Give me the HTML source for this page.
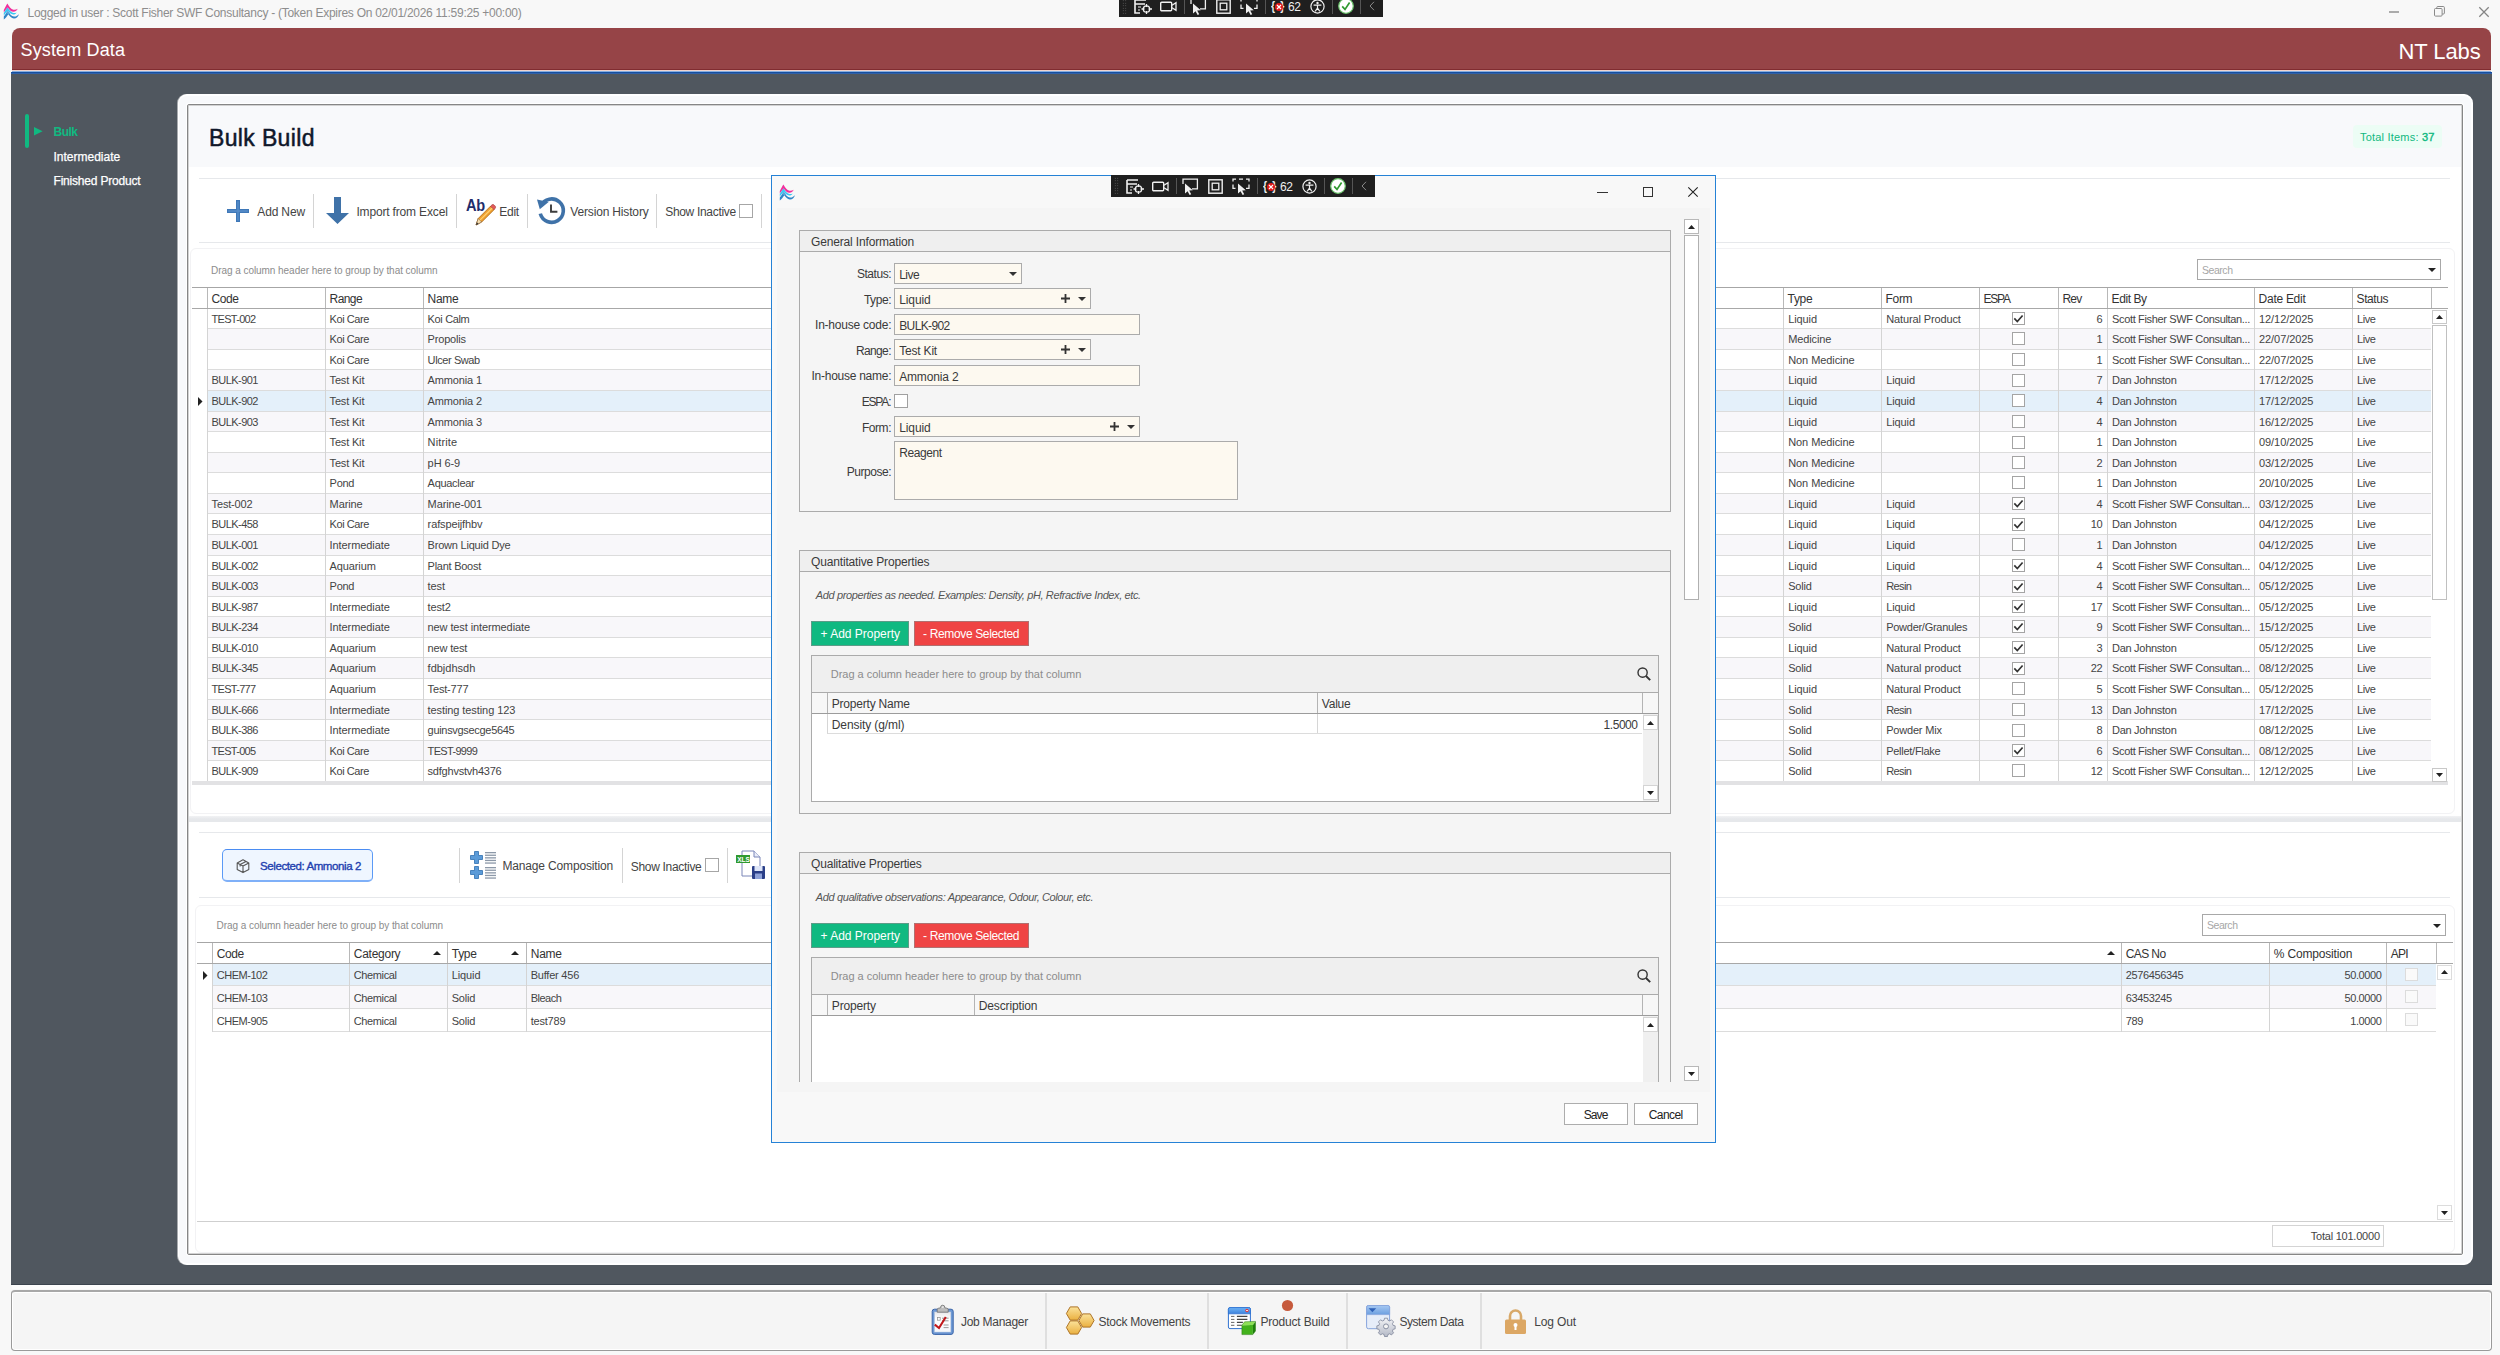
<!DOCTYPE html>
<html><head><meta charset="utf-8"><title>System Data</title><style>
*{box-sizing:border-box;margin:0;padding:0}
html,body{width:2500px;height:1355px;overflow:hidden;background:#f8f8f8;font-family:"Liberation Sans",sans-serif;font-size:12px;color:#333}
.a{position:absolute}
.t{position:absolute;white-space:nowrap;line-height:1}
svg{position:absolute;overflow:visible}
.cb{position:absolute;width:14px;height:14px;border:1px solid #a6a6a6;background:#fff}
.sep{position:absolute;width:1px;background:#d4d4d4}
.hl{position:absolute;height:1px;background:#e6e8eb}
</style></head>
<body>
<div class="t" style="left:27.5px;top:7px;font-size:12px;color:#8d8d8d;letter-spacing:-0.27px">Logged in user : Scott Fisher SWF Consultancy - (Token Expires On 02/01/2026 11:59:25 +00:00)</div>
<div class="a" style="left:11px;top:72px;width:2481px;height:1213px;background:#50575f;border-bottom:1px solid #3c444e"></div>
<div class="a" style="left:12px;top:28px;width:2479px;height:41px;background:#964447;border-radius:8px 8px 0 0"></div>
<div class="a" style="left:12px;top:69px;width:2479px;height:1px;background:#802c30"></div>
<div class="a" style="left:12px;top:70px;width:2479px;height:1px;background:#f0d4ce"></div>
<div class="a" style="left:12px;top:71px;width:2479px;height:1px;background:#86aee0"></div>
<div class="a" style="left:11px;top:72px;width:2481px;height:1px;background:#164e9e"></div>
<div class="a" style="left:11px;top:73px;width:2481px;height:1px;background:#2f60a8"></div>
<div class="t" style="left:20.5px;top:41px;font-size:18px;color:#fff;letter-spacing:0.15px">System Data</div>
<div class="t" style="left:2398.5px;top:40.5px;font-size:22px;color:#fff;letter-spacing:-0.1px">NT Labs</div>
<div class="a" style="left:25.3px;top:113.5px;width:4px;height:34.5px;background:#10b981;border-radius:2px"></div>
<svg style="left:34px;top:127px" width="9" height="9" viewBox="0 0 9 9"><path d="M0 0 L8.6 4.3 L0 8.6 Z" fill="#10b981"/></svg>
<div class="t" style="left:53.5px;top:126px;font-size:12px;font-weight:700;color:#10b981;letter-spacing:-0.5px">Bulk</div>
<div class="t" style="left:53.5px;top:151px;font-size:12px;color:#fff;letter-spacing:0px;-webkit-text-stroke:.25px #fff">Intermediate</div>
<div class="t" style="left:53.5px;top:175px;font-size:12px;color:#fff;letter-spacing:-0.2px;-webkit-text-stroke:.25px #fff">Finished Product</div>
<div class="a" style="left:178px;top:94px;width:2295px;height:1171px;background:#f8f9fb;border:2px solid #fff;border-left-width:1px;border-radius:9px;box-shadow:-1px 0 0 0 rgba(255,255,255,.5)"></div>
<div class="a" style="left:187px;top:104px;width:2276px;height:1151px;background:#fff;border:1px solid #868686;border-radius:2px;box-shadow:0 0 0 1px #fff,inset 0 0 0 1px #d2d2d2"></div>
<div class="a" style="left:189px;top:106px;width:2272px;height:61px;background:#f8f9fb"></div>
<div class="t" style="left:209px;top:127px;font-size:23px;color:#0f172a;-webkit-text-stroke:0.5px #0f172a;letter-spacing:0.35px">Bulk Build</div>
<div class="a" style="left:2353px;top:125px;width:89px;height:23px;background:#ecfdf5;border-radius:4px"></div>
<div class="t" style="left:2360px;top:132px;font-size:11px;color:#10b981;letter-spacing:0.2px">Total Items: <b style="font-weight:400;-webkit-text-stroke:0.4px #10b981">37</b></div>
<svg style="left:0px;top:0px" width="20" height="20" viewBox="0 0 20 20"><path d="M3.8 12.6 L3.8 10 C5 8 6.4 5 7.4 3.5 C8.8 6.4 11 9.2 13.5 9.7 C15 9.9 16.5 9.5 17.7 8.8 C16.9 10.9 15 11.9 13.4 11.8 C11 11.6 9 9.5 7.6 7.4 C6.2 9 5 11 3.8 12.6 Z" fill="#f0309c"/><path d="M3.8 15.6 L3.8 12.9 C5 11.2 6.3 9 7.6 7.5 C9 10 11 12.6 13.5 13 C14.8 13.1 15.8 12.9 16.6 12.5 C15.9 14 14.5 14.7 13.2 14.6 C11 14.3 9.2 12.6 7.9 10.8 C6.5 12 5 14 3.8 15.6Z" fill="#38c8f4"/><path d="M3.8 19.6 L3.8 16.4 C5 14.8 6.5 12.4 7.9 10.9 C9.5 13.5 11.5 16.2 14 16.6 C16 16.8 17.8 15.6 19 14 C18.4 16.7 16.2 18.7 13.8 18.5 C11.5 18.2 9.8 16.2 8.3 14.2 C7 16 5.5 18.5 3.8 19.6 Z" fill="#2f86c8"/><path d="M6.2 13 L7.9 10.9 L10 13.6 L8.3 14.2 Z" fill="#5aa4dc"/></svg>
<div class="a" style="left:1119px;top:-5px;width:264px;height:22px;background:#1f1f1f"></div>
<div class="a" style="left:1122px;top:-3px;width:5px;height:18px;background-image:radial-gradient(#666 0.7px,transparent 0.8px);background-size:2.5px 2.5px"></div>
<svg style="left:1134px;top:-1.1px" width="19" height="15" viewBox="0 0 19 15"><path d="M1 1h11M1 1v13h5M1 5h10" fill="none" stroke="#f0f0f0" stroke-width="1.6"/><path d="M4 8h3M4 11h2" stroke="#f0f0f0" stroke-width="1.2"/><circle cx="12.5" cy="10" r="3.2" fill="none" stroke="#f0f0f0" stroke-width="1.3"/><path d="M12.5 5v3M12.5 12v3M7.5 10h3M14.5 10h3.5" stroke="#f0f0f0" stroke-width="1.3"/></svg>
<svg style="left:1160px;top:0.9px" width="17" height="11" viewBox="0 0 17 11"><rect x=".7" y="1.2" width="11" height="8.6" rx="1" fill="none" stroke="#f0f0f0" stroke-width="1.4"/><path d="M12 4.2 L16 1.6 V9.4 L12 6.8" fill="none" stroke="#f0f0f0" stroke-width="1.3"/></svg>
<div class="a" style="left:1184px;top:-2px;width:1px;height:16px;background:#555"></div>
<svg style="left:1188px;top:-2.1px" width="18" height="17" viewBox="0 0 18 17"><path d="M3 6V1.2h14.4v9.6H12" fill="none" stroke="#f0f0f0" stroke-width="1.3"/><path d="M5 5.5 L5 15.5 L7.6 13.2 L9.6 17 L11.2 16.2 L9.2 12.4 L12.8 12.2 Z" fill="#f0f0f0"/></svg>
<svg style="left:1216px;top:-1.1px" width="15" height="15" viewBox="0 0 15 15"><rect x=".8" y=".8" width="13.4" height="13.4" fill="none" stroke="#f0f0f0" stroke-width="1.4"/><rect x="4.2" y="4.2" width="6.6" height="6.6" fill="none" stroke="#f0f0f0" stroke-width="1.3"/></svg>
<svg style="left:1240px;top:-2.1px" width="18" height="17" viewBox="0 0 18 17"><path d="M1 3.5V1.2h3M7 1.2h4M14 1.2h3v2.3M17 6.5v3.8h-3M1 6.5v3.8h2.5" fill="none" stroke="#f0f0f0" stroke-width="1.3"/><path d="M6 5.5 L6 15.5 L8.6 13.2 L10.6 17 L12.2 16.2 L10.2 12.4 L13.8 12.2 Z" fill="#f0f0f0"/></svg>
<div class="a" style="left:1265px;top:-2px;width:1px;height:16px;background:#555"></div>
<div class="t" style="left:1271px;top:-1.0px;font-size:13px;font-weight:700;color:#f0f0f0;letter-spacing:6.5px;transform:scaleX(.8);transform-origin:0 0">{}</div>
<div class="a" style="left:1275.2px;top:2.6px;width:8px;height:8px;border-radius:4px;background:#e01818"></div>
<svg style="left:1277.2px;top:4.6px" width="4" height="4" viewBox="0 0 4 4"><path d="M0 0L4 4M4 0L0 4" stroke="#fff" stroke-width="1.2"/></svg>
<div class="t" style="left:1288px;top:0.5px;font-size:12px;color:#f0f0f0;letter-spacing:-0.3px">62</div>
<svg style="left:1310px;top:-1.1px" width="15" height="15" viewBox="0 0 15 15"><circle cx="7.5" cy="7.5" r="6.6" fill="none" stroke="#f0f0f0" stroke-width="1.2"/><circle cx="7.5" cy="4" r="1.2" fill="#f0f0f0"/><path d="M3.6 6.2h7.8M7.5 6.2v3M7.5 9 L5.2 12.4M7.5 9 L9.8 12.4" stroke="#f0f0f0" stroke-width="1.2" fill="none"/></svg>
<div class="a" style="left:1332px;top:-2px;width:1px;height:16px;background:#555"></div>
<svg style="left:1338px;top:-1.6px" width="16" height="16" viewBox="0 0 16 16"><circle cx="8" cy="8" r="7.3" fill="#fff" stroke="#6cc46c" stroke-width="1.2"/><path d="M4.2 8.4 L7 11.4 L11.6 4.6" fill="none" stroke="#2f9a2f" stroke-width="1.7"/></svg>
<div class="a" style="left:1360px;top:-2px;width:1px;height:16px;background:#555"></div>
<svg style="left:1369px;top:1.4px" width="6" height="10" viewBox="0 0 6 10"><path d="M5 .8 L1 5 L5 9.2" fill="none" stroke="#8a8a8a" stroke-width="1"/></svg>
<div class="a" style="left:2389px;top:11px;width:10px;height:2px;background:#ababab"></div>
<svg style="left:2434px;top:6px" width="11" height="11" viewBox="0 0 11 11"><rect x=".5" y="2.5" width="7.6" height="7.6" rx="1" fill="none" stroke="#8a8a8a" stroke-width="1"/><path d="M2.8 2.5V1.4Q2.8 .5 3.8 .5H9.3Q10.4 .5 10.4 1.6V7Q10.4 8 9.4 8H8.2" fill="none" stroke="#8a8a8a" stroke-width="1"/></svg>
<svg style="left:2479px;top:7px" width="10" height="10" viewBox="0 0 10 10"><path d="M.3 .3L9.7 9.7M9.7 .3L.3 9.7" stroke="#858585" stroke-width="1.25"/></svg>
<div class="hl" style="left:199px;top:178px;width:2251px"></div>
<div class="hl" style="left:199px;top:242px;width:2251px"></div>
<svg style="left:227px;top:200px" width="22" height="22" viewBox="0 0 22 22"><path d="M9 0h4v9h9v4h-9v9h-4v-9h-9v-4h9z" fill="#3f78b8"/><path d="M10.3 1.2h1.4v9.1h9.1v1.4h-9.1v9.1h-1.4v-9.1h-9.1v-1.4h9.1z" fill="#6ea0d8" opacity=".55"/></svg>
<div class="t" style="left:257.3px;top:206px;font-size:12px;color:#444;letter-spacing:-0.152px;">Add New</div>
<div class="sep" style="left:313px;top:194px;height:34px"></div>
<svg style="left:326px;top:197px" width="23" height="27" viewBox="0 0 23 27"><path d="M8 0h7v16h8l-11.5 11l-11.5-11h8z" fill="#3f72a8"/></svg>
<div class="t" style="left:356.4px;top:206px;font-size:12px;color:#444;letter-spacing:-0.162px;">Import from Excel</div>
<div class="sep" style="left:456px;top:194px;height:34px"></div>
<div class="t" style="left:465.5px;top:198px;font-size:16.6px;font-weight:700;color:#1f2d6b;letter-spacing:-0.4px;transform:scaleX(.88);transform-origin:0 0">Ab</div>
<svg style="left:474px;top:204px" width="22" height="22" viewBox="0 0 22 22"><path d="M2 21 L4.2 14.5 L16.5 2.2 L20 5.7 L7.7 18 Z" fill="#f0a030" stroke="#a86410" stroke-width=".8"/><path d="M16.5 2.2 L18 .8 Q19 0 20 .9 L21.3 2.2 Q22 3.2 21.2 4.2 L20 5.7 Z" fill="#e25b5b" stroke="#a03030" stroke-width=".6"/><path d="M2 21 L4.2 14.5 L7.7 18 Z" fill="#f5deb0" stroke="#806040" stroke-width=".6"/><path d="M2 21 L2.9 18.3 L4.6 20 Z" fill="#333"/><path d="M6 16.2 L18.2 4" stroke="#ffd070" stroke-width="1.2"/></svg>
<div class="t" style="left:499.3px;top:206px;font-size:12px;color:#444;letter-spacing:-0.291px;">Edit</div>
<div class="sep" style="left:527px;top:194px;height:34px"></div>
<svg style="left:0;top:0" width="600" height="240" viewBox="0 0 600 240"><path d="M541 205.7 A11.7 11.7 0 1 1 540.3 213.6" fill="none" stroke="#3f72a8" stroke-width="3.6"/><path d="M537 199.6 L548.6 202 L539.8 209.2 Z" fill="#3f72a8"/><path d="M551 204.4 V211.8 H557.4" fill="none" stroke="#3c3c3c" stroke-width="1.9"/></svg>
<div class="t" style="left:570.3px;top:206px;font-size:12px;color:#444;letter-spacing:-0.163px;">Version History</div>
<div class="sep" style="left:656px;top:194px;height:34px"></div>
<div class="t" style="left:665.2px;top:206px;font-size:12px;color:#444;letter-spacing:-0.312px;">Show Inactive</div>
<div class="cb" style="left:739px;top:204px"></div>
<div class="sep" style="left:761px;top:194px;height:34px"></div>
<div class="a" style="left:190px;top:248px;width:2265px;height:566px;border:1px solid #f2f2f4;border-radius:6px;background:#fff"></div>
<div class="t" style="left:211px;top:265.5px;font-size:10px;color:#8c8c8c;letter-spacing:-0.051px;">Drag a column header here to group by that column</div>
<div class="a" style="left:2197px;top:259px;width:244px;height:21px;border:1px solid #a8a8a8;background:#fff"></div>
<div class="t" style="left:2202px;top:265px;font-size:10.5px;color:#a6a6a6;letter-spacing:-0.456px;">Search</div>
<svg style="left:2428px;top:268px" width="8" height="4" viewBox="0 0 8 4"><path d="M0 0h8l-4 4z" fill="#222"/></svg>
<div class="a" style="left:192px;top:287px;width:2256px;height:22px;background:#fff;border-top:1px solid #a6a6a6;border-bottom:1px solid #a8a8a8"></div>
<div class="a" style="left:207px;top:288px;width:1px;height:20px;background:#b8b8b8"></div>
<div class="t" style="left:211.6px;top:293px;font-size:12px;color:#333;letter-spacing:-0.426px;">Code</div>
<div class="a" style="left:325px;top:288px;width:1px;height:20px;background:#b8b8b8"></div>
<div class="t" style="left:329.6px;top:293px;font-size:12px;color:#333;letter-spacing:-0.585px;">Range</div>
<div class="a" style="left:423px;top:288px;width:1px;height:20px;background:#b8b8b8"></div>
<div class="t" style="left:427.6px;top:293px;font-size:12px;color:#333;letter-spacing:-0.312px;">Name</div>
<div class="a" style="left:1783px;top:288px;width:1px;height:20px;background:#b8b8b8"></div>
<div class="t" style="left:1787.6px;top:293px;font-size:12px;color:#333;letter-spacing:-0.335px;">Type</div>
<div class="a" style="left:1881px;top:288px;width:1px;height:20px;background:#b8b8b8"></div>
<div class="t" style="left:1885.6px;top:293px;font-size:12px;color:#333;letter-spacing:-0.353px;">Form</div>
<div class="a" style="left:1979px;top:288px;width:1px;height:20px;background:#b8b8b8"></div>
<div class="t" style="left:1983.6px;top:293px;font-size:12px;color:#333;letter-spacing:-1.25px;">ESPA</div>
<div class="a" style="left:2058px;top:288px;width:1px;height:20px;background:#b8b8b8"></div>
<div class="t" style="left:2062.6px;top:293px;font-size:12px;color:#333;letter-spacing:-0.895px;">Rev</div>
<div class="a" style="left:2107px;top:288px;width:1px;height:20px;background:#b8b8b8"></div>
<div class="t" style="left:2111.6px;top:293px;font-size:12px;color:#333;letter-spacing:-0.429px;">Edit By</div>
<div class="a" style="left:2254px;top:288px;width:1px;height:20px;background:#b8b8b8"></div>
<div class="t" style="left:2258.6px;top:293px;font-size:12px;color:#333;letter-spacing:-0.279px;">Date Edit</div>
<div class="a" style="left:2352px;top:288px;width:1px;height:20px;background:#b8b8b8"></div>
<div class="t" style="left:2356.6px;top:293px;font-size:12px;color:#333;letter-spacing:-0.413px;">Status</div>
<div class="a" style="left:2431px;top:288px;width:1px;height:20px;background:#b8b8b8"></div>
<div class="a" style="left:207px;top:309px;width:2224px;height:20px;background:#fff;border-bottom:1px solid #dcdcdc"></div>
<div class="t" style="left:211.6px;top:314px;font-size:11px;color:#444;letter-spacing:-0.714px;">TEST-002</div>
<div class="t" style="left:329.6px;top:314px;font-size:11px;color:#444;letter-spacing:-0.435px;">Koi Care</div>
<div class="t" style="left:427.6px;top:314px;font-size:11px;color:#444;letter-spacing:-0.354px;">Koi Calm</div>
<div class="t" style="left:1788.2px;top:314px;font-size:11px;color:#444;letter-spacing:-0.094px;">Liquid</div>
<div class="t" style="left:1886.2px;top:314px;font-size:11px;color:#444;letter-spacing:-0.125px;">Natural Product</div>
<div class="cb" style="left:2012px;top:312px;width:13px;height:13px;border-color:#a4a4a4"><svg style="left:0;top:0" width="11" height="11" viewBox="0 0 11 11"><path d="M1.3 5.4 L4.3 8.5 L9.6 2.5" fill="none" stroke="#333" stroke-width="1.7"/></svg></div>
<div class="t" style="right:397.66px;top:314px;font-size:11px;color:#444;letter-spacing:-0.36px;">6</div>
<div class="t" style="left:2112px;top:314px;font-size:11px;color:#444;letter-spacing:-0.345px;">Scott Fisher SWF Consultan...</div>
<div class="t" style="left:2259px;top:314px;font-size:11px;color:#444;letter-spacing:-0.066px;">12/12/2025</div>
<div class="t" style="left:2357px;top:314px;font-size:11px;color:#444;letter-spacing:-0.466px;">Live</div>
<div class="a" style="left:207px;top:329px;width:2224px;height:21px;background:#f8f7fa;border-bottom:1px solid #dcdcdc"></div>
<div class="t" style="left:329.6px;top:334px;font-size:11px;color:#444;letter-spacing:-0.435px;">Koi Care</div>
<div class="t" style="left:427.6px;top:334px;font-size:11px;color:#444;letter-spacing:-0.193px;">Propolis</div>
<div class="t" style="left:1788.2px;top:334px;font-size:11px;color:#444;letter-spacing:-0.105px;">Medicine</div>
<div class="cb" style="left:2012px;top:332px;width:13px;height:13px;border-color:#a4a4a4"></div>
<div class="t" style="right:397.66px;top:334px;font-size:11px;color:#444;letter-spacing:-0.36px;">1</div>
<div class="t" style="left:2112px;top:334px;font-size:11px;color:#444;letter-spacing:-0.345px;">Scott Fisher SWF Consultan...</div>
<div class="t" style="left:2259px;top:334px;font-size:11px;color:#444;letter-spacing:-0.066px;">22/07/2025</div>
<div class="t" style="left:2357px;top:334px;font-size:11px;color:#444;letter-spacing:-0.466px;">Live</div>
<div class="a" style="left:207px;top:350px;width:2224px;height:20px;background:#fff;border-bottom:1px solid #dcdcdc"></div>
<div class="t" style="left:329.6px;top:355px;font-size:11px;color:#444;letter-spacing:-0.435px;">Koi Care</div>
<div class="t" style="left:427.6px;top:355px;font-size:11px;color:#444;letter-spacing:-0.406px;">Ulcer Swab</div>
<div class="t" style="left:1788.2px;top:355px;font-size:11px;color:#444;letter-spacing:-0.072px;">Non Medicine</div>
<div class="cb" style="left:2012px;top:353px;width:13px;height:13px;border-color:#a4a4a4"></div>
<div class="t" style="right:397.66px;top:355px;font-size:11px;color:#444;letter-spacing:-0.36px;">1</div>
<div class="t" style="left:2112px;top:355px;font-size:11px;color:#444;letter-spacing:-0.345px;">Scott Fisher SWF Consultan...</div>
<div class="t" style="left:2259px;top:355px;font-size:11px;color:#444;letter-spacing:-0.066px;">22/07/2025</div>
<div class="t" style="left:2357px;top:355px;font-size:11px;color:#444;letter-spacing:-0.466px;">Live</div>
<div class="a" style="left:207px;top:370px;width:2224px;height:21px;background:#f8f7fa;border-bottom:1px solid #dcdcdc"></div>
<div class="t" style="left:211.6px;top:375px;font-size:11px;color:#444;letter-spacing:-0.565px;">BULK-901</div>
<div class="t" style="left:329.6px;top:375px;font-size:11px;color:#444;letter-spacing:-0.175px;">Test Kit</div>
<div class="t" style="left:427.6px;top:375px;font-size:11px;color:#444;letter-spacing:-0.152px;">Ammonia 1</div>
<div class="t" style="left:1788.2px;top:375px;font-size:11px;color:#444;letter-spacing:-0.094px;">Liquid</div>
<div class="t" style="left:1886.2px;top:375px;font-size:11px;color:#444;letter-spacing:-0.094px;">Liquid</div>
<div class="cb" style="left:2012px;top:374px;width:13px;height:13px;border-color:#a4a4a4"></div>
<div class="t" style="right:397.66px;top:375px;font-size:11px;color:#444;letter-spacing:-0.36px;">7</div>
<div class="t" style="left:2112px;top:375px;font-size:11px;color:#444;letter-spacing:-0.285px;">Dan Johnston</div>
<div class="t" style="left:2259px;top:375px;font-size:11px;color:#444;letter-spacing:-0.066px;">17/12/2025</div>
<div class="t" style="left:2357px;top:375px;font-size:11px;color:#444;letter-spacing:-0.466px;">Live</div>
<div class="a" style="left:207px;top:391px;width:2224px;height:21px;background:#e4f0fa;border-bottom:1px solid #dcdcdc"></div>
<div class="t" style="left:211.6px;top:396px;font-size:11px;color:#444;letter-spacing:-0.565px;">BULK-902</div>
<div class="t" style="left:329.6px;top:396px;font-size:11px;color:#444;letter-spacing:-0.175px;">Test Kit</div>
<div class="t" style="left:427.6px;top:396px;font-size:11px;color:#444;letter-spacing:-0.152px;">Ammonia 2</div>
<div class="t" style="left:1788.2px;top:396px;font-size:11px;color:#444;letter-spacing:-0.094px;">Liquid</div>
<div class="t" style="left:1886.2px;top:396px;font-size:11px;color:#444;letter-spacing:-0.094px;">Liquid</div>
<div class="cb" style="left:2012px;top:394px;width:13px;height:13px;border-color:#a4a4a4"></div>
<div class="t" style="right:397.66px;top:396px;font-size:11px;color:#444;letter-spacing:-0.36px;">4</div>
<div class="t" style="left:2112px;top:396px;font-size:11px;color:#444;letter-spacing:-0.285px;">Dan Johnston</div>
<div class="t" style="left:2259px;top:396px;font-size:11px;color:#444;letter-spacing:-0.066px;">17/12/2025</div>
<div class="t" style="left:2357px;top:396px;font-size:11px;color:#444;letter-spacing:-0.466px;">Live</div>
<div class="a" style="left:207px;top:412px;width:2224px;height:20px;background:#f8f7fa;border-bottom:1px solid #dcdcdc"></div>
<div class="t" style="left:211.6px;top:417px;font-size:11px;color:#444;letter-spacing:-0.565px;">BULK-903</div>
<div class="t" style="left:329.6px;top:417px;font-size:11px;color:#444;letter-spacing:-0.175px;">Test Kit</div>
<div class="t" style="left:427.6px;top:417px;font-size:11px;color:#444;letter-spacing:-0.152px;">Ammonia 3</div>
<div class="t" style="left:1788.2px;top:417px;font-size:11px;color:#444;letter-spacing:-0.094px;">Liquid</div>
<div class="t" style="left:1886.2px;top:417px;font-size:11px;color:#444;letter-spacing:-0.094px;">Liquid</div>
<div class="cb" style="left:2012px;top:415px;width:13px;height:13px;border-color:#a4a4a4"></div>
<div class="t" style="right:397.66px;top:417px;font-size:11px;color:#444;letter-spacing:-0.36px;">4</div>
<div class="t" style="left:2112px;top:417px;font-size:11px;color:#444;letter-spacing:-0.285px;">Dan Johnston</div>
<div class="t" style="left:2259px;top:417px;font-size:11px;color:#444;letter-spacing:-0.066px;">16/12/2025</div>
<div class="t" style="left:2357px;top:417px;font-size:11px;color:#444;letter-spacing:-0.466px;">Live</div>
<div class="a" style="left:207px;top:432px;width:2224px;height:21px;background:#fff;border-bottom:1px solid #dcdcdc"></div>
<div class="t" style="left:329.6px;top:437px;font-size:11px;color:#444;letter-spacing:-0.175px;">Test Kit</div>
<div class="t" style="left:427.6px;top:437px;font-size:11px;color:#444;letter-spacing:0.139px;">Nitrite</div>
<div class="t" style="left:1788.2px;top:437px;font-size:11px;color:#444;letter-spacing:-0.072px;">Non Medicine</div>
<div class="cb" style="left:2012px;top:436px;width:13px;height:13px;border-color:#a4a4a4"></div>
<div class="t" style="right:397.66px;top:437px;font-size:11px;color:#444;letter-spacing:-0.36px;">1</div>
<div class="t" style="left:2112px;top:437px;font-size:11px;color:#444;letter-spacing:-0.285px;">Dan Johnston</div>
<div class="t" style="left:2259px;top:437px;font-size:11px;color:#444;letter-spacing:-0.066px;">09/10/2025</div>
<div class="t" style="left:2357px;top:437px;font-size:11px;color:#444;letter-spacing:-0.466px;">Live</div>
<div class="a" style="left:207px;top:453px;width:2224px;height:20px;background:#f8f7fa;border-bottom:1px solid #dcdcdc"></div>
<div class="t" style="left:329.6px;top:458px;font-size:11px;color:#444;letter-spacing:-0.175px;">Test Kit</div>
<div class="t" style="left:427.6px;top:458px;font-size:11px;color:#444;letter-spacing:-0.074px;">pH 6-9</div>
<div class="t" style="left:1788.2px;top:458px;font-size:11px;color:#444;letter-spacing:-0.072px;">Non Medicine</div>
<div class="cb" style="left:2012px;top:456px;width:13px;height:13px;border-color:#a4a4a4"></div>
<div class="t" style="right:397.66px;top:458px;font-size:11px;color:#444;letter-spacing:-0.36px;">2</div>
<div class="t" style="left:2112px;top:458px;font-size:11px;color:#444;letter-spacing:-0.285px;">Dan Johnston</div>
<div class="t" style="left:2259px;top:458px;font-size:11px;color:#444;letter-spacing:-0.066px;">03/12/2025</div>
<div class="t" style="left:2357px;top:458px;font-size:11px;color:#444;letter-spacing:-0.466px;">Live</div>
<div class="a" style="left:207px;top:473px;width:2224px;height:21px;background:#fff;border-bottom:1px solid #dcdcdc"></div>
<div class="t" style="left:329.6px;top:478px;font-size:11px;color:#444;letter-spacing:-0.284px;">Pond</div>
<div class="t" style="left:427.6px;top:478px;font-size:11px;color:#444;letter-spacing:-0.294px;">Aquaclear</div>
<div class="t" style="left:1788.2px;top:478px;font-size:11px;color:#444;letter-spacing:-0.072px;">Non Medicine</div>
<div class="cb" style="left:2012px;top:476px;width:13px;height:13px;border-color:#a4a4a4"></div>
<div class="t" style="right:397.66px;top:478px;font-size:11px;color:#444;letter-spacing:-0.36px;">1</div>
<div class="t" style="left:2112px;top:478px;font-size:11px;color:#444;letter-spacing:-0.285px;">Dan Johnston</div>
<div class="t" style="left:2259px;top:478px;font-size:11px;color:#444;letter-spacing:-0.066px;">20/10/2025</div>
<div class="t" style="left:2357px;top:478px;font-size:11px;color:#444;letter-spacing:-0.466px;">Live</div>
<div class="a" style="left:207px;top:494px;width:2224px;height:20px;background:#f8f7fa;border-bottom:1px solid #dcdcdc"></div>
<div class="t" style="left:211.6px;top:499px;font-size:11px;color:#444;letter-spacing:-0.164px;">Test-002</div>
<div class="t" style="left:329.6px;top:499px;font-size:11px;color:#444;letter-spacing:-0.113px;">Marine</div>
<div class="t" style="left:427.6px;top:499px;font-size:11px;color:#444;letter-spacing:-0.115px;">Marine-001</div>
<div class="t" style="left:1788.2px;top:499px;font-size:11px;color:#444;letter-spacing:-0.094px;">Liquid</div>
<div class="t" style="left:1886.2px;top:499px;font-size:11px;color:#444;letter-spacing:-0.094px;">Liquid</div>
<div class="cb" style="left:2012px;top:497px;width:13px;height:13px;border-color:#a4a4a4"><svg style="left:0;top:0" width="11" height="11" viewBox="0 0 11 11"><path d="M1.3 5.4 L4.3 8.5 L9.6 2.5" fill="none" stroke="#333" stroke-width="1.7"/></svg></div>
<div class="t" style="right:397.66px;top:499px;font-size:11px;color:#444;letter-spacing:-0.36px;">4</div>
<div class="t" style="left:2112px;top:499px;font-size:11px;color:#444;letter-spacing:-0.345px;">Scott Fisher SWF Consultan...</div>
<div class="t" style="left:2259px;top:499px;font-size:11px;color:#444;letter-spacing:-0.066px;">03/12/2025</div>
<div class="t" style="left:2357px;top:499px;font-size:11px;color:#444;letter-spacing:-0.466px;">Live</div>
<div class="a" style="left:207px;top:514px;width:2224px;height:21px;background:#fff;border-bottom:1px solid #dcdcdc"></div>
<div class="t" style="left:211.6px;top:519px;font-size:11px;color:#444;letter-spacing:-0.565px;">BULK-458</div>
<div class="t" style="left:329.6px;top:519px;font-size:11px;color:#444;letter-spacing:-0.435px;">Koi Care</div>
<div class="t" style="left:427.6px;top:519px;font-size:11px;color:#444;letter-spacing:-0.118px;">rafspeijfhbv</div>
<div class="t" style="left:1788.2px;top:519px;font-size:11px;color:#444;letter-spacing:-0.094px;">Liquid</div>
<div class="t" style="left:1886.2px;top:519px;font-size:11px;color:#444;letter-spacing:-0.094px;">Liquid</div>
<div class="cb" style="left:2012px;top:518px;width:13px;height:13px;border-color:#a4a4a4"><svg style="left:0;top:0" width="11" height="11" viewBox="0 0 11 11"><path d="M1.3 5.4 L4.3 8.5 L9.6 2.5" fill="none" stroke="#333" stroke-width="1.7"/></svg></div>
<div class="t" style="right:397.66px;top:519px;font-size:11px;color:#444;letter-spacing:-0.36px;">10</div>
<div class="t" style="left:2112px;top:519px;font-size:11px;color:#444;letter-spacing:-0.285px;">Dan Johnston</div>
<div class="t" style="left:2259px;top:519px;font-size:11px;color:#444;letter-spacing:-0.066px;">04/12/2025</div>
<div class="t" style="left:2357px;top:519px;font-size:11px;color:#444;letter-spacing:-0.466px;">Live</div>
<div class="a" style="left:207px;top:535px;width:2224px;height:21px;background:#f8f7fa;border-bottom:1px solid #dcdcdc"></div>
<div class="t" style="left:211.6px;top:540px;font-size:11px;color:#444;letter-spacing:-0.565px;">BULK-001</div>
<div class="t" style="left:329.6px;top:540px;font-size:11px;color:#444;letter-spacing:-0.089px;">Intermediate</div>
<div class="t" style="left:427.6px;top:540px;font-size:11px;color:#444;letter-spacing:-0.218px;">Brown Liquid Dye</div>
<div class="t" style="left:1788.2px;top:540px;font-size:11px;color:#444;letter-spacing:-0.094px;">Liquid</div>
<div class="t" style="left:1886.2px;top:540px;font-size:11px;color:#444;letter-spacing:-0.094px;">Liquid</div>
<div class="cb" style="left:2012px;top:538px;width:13px;height:13px;border-color:#a4a4a4"></div>
<div class="t" style="right:397.66px;top:540px;font-size:11px;color:#444;letter-spacing:-0.36px;">1</div>
<div class="t" style="left:2112px;top:540px;font-size:11px;color:#444;letter-spacing:-0.285px;">Dan Johnston</div>
<div class="t" style="left:2259px;top:540px;font-size:11px;color:#444;letter-spacing:-0.066px;">04/12/2025</div>
<div class="t" style="left:2357px;top:540px;font-size:11px;color:#444;letter-spacing:-0.466px;">Live</div>
<div class="a" style="left:207px;top:556px;width:2224px;height:20px;background:#fff;border-bottom:1px solid #dcdcdc"></div>
<div class="t" style="left:211.6px;top:561px;font-size:11px;color:#444;letter-spacing:-0.565px;">BULK-002</div>
<div class="t" style="left:329.6px;top:561px;font-size:11px;color:#444;letter-spacing:-0.115px;">Aquarium</div>
<div class="t" style="left:427.6px;top:561px;font-size:11px;color:#444;letter-spacing:-0.262px;">Plant Boost</div>
<div class="t" style="left:1788.2px;top:561px;font-size:11px;color:#444;letter-spacing:-0.094px;">Liquid</div>
<div class="t" style="left:1886.2px;top:561px;font-size:11px;color:#444;letter-spacing:-0.094px;">Liquid</div>
<div class="cb" style="left:2012px;top:559px;width:13px;height:13px;border-color:#a4a4a4"><svg style="left:0;top:0" width="11" height="11" viewBox="0 0 11 11"><path d="M1.3 5.4 L4.3 8.5 L9.6 2.5" fill="none" stroke="#333" stroke-width="1.7"/></svg></div>
<div class="t" style="right:397.66px;top:561px;font-size:11px;color:#444;letter-spacing:-0.36px;">4</div>
<div class="t" style="left:2112px;top:561px;font-size:11px;color:#444;letter-spacing:-0.345px;">Scott Fisher SWF Consultan...</div>
<div class="t" style="left:2259px;top:561px;font-size:11px;color:#444;letter-spacing:-0.066px;">04/12/2025</div>
<div class="t" style="left:2357px;top:561px;font-size:11px;color:#444;letter-spacing:-0.466px;">Live</div>
<div class="a" style="left:207px;top:576px;width:2224px;height:21px;background:#f8f7fa;border-bottom:1px solid #dcdcdc"></div>
<div class="t" style="left:211.6px;top:581px;font-size:11px;color:#444;letter-spacing:-0.565px;">BULK-003</div>
<div class="t" style="left:329.6px;top:581px;font-size:11px;color:#444;letter-spacing:-0.284px;">Pond</div>
<div class="t" style="left:427.6px;top:581px;font-size:11px;color:#444;letter-spacing:-0.093px;">test</div>
<div class="t" style="left:1788.2px;top:581px;font-size:11px;color:#444;letter-spacing:-0.215px;">Solid</div>
<div class="t" style="left:1886.2px;top:581px;font-size:11px;color:#444;letter-spacing:-0.597px;">Resin</div>
<div class="cb" style="left:2012px;top:580px;width:13px;height:13px;border-color:#a4a4a4"><svg style="left:0;top:0" width="11" height="11" viewBox="0 0 11 11"><path d="M1.3 5.4 L4.3 8.5 L9.6 2.5" fill="none" stroke="#333" stroke-width="1.7"/></svg></div>
<div class="t" style="right:397.66px;top:581px;font-size:11px;color:#444;letter-spacing:-0.36px;">4</div>
<div class="t" style="left:2112px;top:581px;font-size:11px;color:#444;letter-spacing:-0.345px;">Scott Fisher SWF Consultan...</div>
<div class="t" style="left:2259px;top:581px;font-size:11px;color:#444;letter-spacing:-0.066px;">05/12/2025</div>
<div class="t" style="left:2357px;top:581px;font-size:11px;color:#444;letter-spacing:-0.466px;">Live</div>
<div class="a" style="left:207px;top:597px;width:2224px;height:20px;background:#fff;border-bottom:1px solid #dcdcdc"></div>
<div class="t" style="left:211.6px;top:602px;font-size:11px;color:#444;letter-spacing:-0.565px;">BULK-987</div>
<div class="t" style="left:329.6px;top:602px;font-size:11px;color:#444;letter-spacing:-0.089px;">Intermediate</div>
<div class="t" style="left:427.6px;top:602px;font-size:11px;color:#444;letter-spacing:-0.147px;">test2</div>
<div class="t" style="left:1788.2px;top:602px;font-size:11px;color:#444;letter-spacing:-0.094px;">Liquid</div>
<div class="t" style="left:1886.2px;top:602px;font-size:11px;color:#444;letter-spacing:-0.094px;">Liquid</div>
<div class="cb" style="left:2012px;top:600px;width:13px;height:13px;border-color:#a4a4a4"><svg style="left:0;top:0" width="11" height="11" viewBox="0 0 11 11"><path d="M1.3 5.4 L4.3 8.5 L9.6 2.5" fill="none" stroke="#333" stroke-width="1.7"/></svg></div>
<div class="t" style="right:397.66px;top:602px;font-size:11px;color:#444;letter-spacing:-0.36px;">17</div>
<div class="t" style="left:2112px;top:602px;font-size:11px;color:#444;letter-spacing:-0.345px;">Scott Fisher SWF Consultan...</div>
<div class="t" style="left:2259px;top:602px;font-size:11px;color:#444;letter-spacing:-0.066px;">05/12/2025</div>
<div class="t" style="left:2357px;top:602px;font-size:11px;color:#444;letter-spacing:-0.466px;">Live</div>
<div class="a" style="left:207px;top:617px;width:2224px;height:21px;background:#f8f7fa;border-bottom:1px solid #dcdcdc"></div>
<div class="t" style="left:211.6px;top:622px;font-size:11px;color:#444;letter-spacing:-0.565px;">BULK-234</div>
<div class="t" style="left:329.6px;top:622px;font-size:11px;color:#444;letter-spacing:-0.089px;">Intermediate</div>
<div class="t" style="left:427.6px;top:622px;font-size:11px;color:#444;letter-spacing:-0.105px;">new test intermediate</div>
<div class="t" style="left:1788.2px;top:622px;font-size:11px;color:#444;letter-spacing:-0.215px;">Solid</div>
<div class="t" style="left:1886.2px;top:622px;font-size:11px;color:#444;letter-spacing:-0.269px;">Powder/Granules</div>
<div class="cb" style="left:2012px;top:620px;width:13px;height:13px;border-color:#a4a4a4"><svg style="left:0;top:0" width="11" height="11" viewBox="0 0 11 11"><path d="M1.3 5.4 L4.3 8.5 L9.6 2.5" fill="none" stroke="#333" stroke-width="1.7"/></svg></div>
<div class="t" style="right:397.66px;top:622px;font-size:11px;color:#444;letter-spacing:-0.36px;">9</div>
<div class="t" style="left:2112px;top:622px;font-size:11px;color:#444;letter-spacing:-0.345px;">Scott Fisher SWF Consultan...</div>
<div class="t" style="left:2259px;top:622px;font-size:11px;color:#444;letter-spacing:-0.066px;">15/12/2025</div>
<div class="t" style="left:2357px;top:622px;font-size:11px;color:#444;letter-spacing:-0.466px;">Live</div>
<div class="a" style="left:207px;top:638px;width:2224px;height:20px;background:#fff;border-bottom:1px solid #dcdcdc"></div>
<div class="t" style="left:211.6px;top:643px;font-size:11px;color:#444;letter-spacing:-0.565px;">BULK-010</div>
<div class="t" style="left:329.6px;top:643px;font-size:11px;color:#444;letter-spacing:-0.115px;">Aquarium</div>
<div class="t" style="left:427.6px;top:643px;font-size:11px;color:#444;letter-spacing:-0.169px;">new test</div>
<div class="t" style="left:1788.2px;top:643px;font-size:11px;color:#444;letter-spacing:-0.094px;">Liquid</div>
<div class="t" style="left:1886.2px;top:643px;font-size:11px;color:#444;letter-spacing:-0.125px;">Natural Product</div>
<div class="cb" style="left:2012px;top:641px;width:13px;height:13px;border-color:#a4a4a4"><svg style="left:0;top:0" width="11" height="11" viewBox="0 0 11 11"><path d="M1.3 5.4 L4.3 8.5 L9.6 2.5" fill="none" stroke="#333" stroke-width="1.7"/></svg></div>
<div class="t" style="right:397.66px;top:643px;font-size:11px;color:#444;letter-spacing:-0.36px;">3</div>
<div class="t" style="left:2112px;top:643px;font-size:11px;color:#444;letter-spacing:-0.285px;">Dan Johnston</div>
<div class="t" style="left:2259px;top:643px;font-size:11px;color:#444;letter-spacing:-0.066px;">05/12/2025</div>
<div class="t" style="left:2357px;top:643px;font-size:11px;color:#444;letter-spacing:-0.466px;">Live</div>
<div class="a" style="left:207px;top:658px;width:2224px;height:21px;background:#f8f7fa;border-bottom:1px solid #dcdcdc"></div>
<div class="t" style="left:211.6px;top:663px;font-size:11px;color:#444;letter-spacing:-0.565px;">BULK-345</div>
<div class="t" style="left:329.6px;top:663px;font-size:11px;color:#444;letter-spacing:-0.115px;">Aquarium</div>
<div class="t" style="left:427.6px;top:663px;font-size:11px;color:#444;letter-spacing:-0.007px;">fdbjdhsdh</div>
<div class="t" style="left:1788.2px;top:663px;font-size:11px;color:#444;letter-spacing:-0.215px;">Solid</div>
<div class="t" style="left:1886.2px;top:663px;font-size:11px;color:#444;letter-spacing:-0.024px;">Natural product</div>
<div class="cb" style="left:2012px;top:662px;width:13px;height:13px;border-color:#a4a4a4"><svg style="left:0;top:0" width="11" height="11" viewBox="0 0 11 11"><path d="M1.3 5.4 L4.3 8.5 L9.6 2.5" fill="none" stroke="#333" stroke-width="1.7"/></svg></div>
<div class="t" style="right:397.66px;top:663px;font-size:11px;color:#444;letter-spacing:-0.36px;">22</div>
<div class="t" style="left:2112px;top:663px;font-size:11px;color:#444;letter-spacing:-0.345px;">Scott Fisher SWF Consultan...</div>
<div class="t" style="left:2259px;top:663px;font-size:11px;color:#444;letter-spacing:-0.066px;">08/12/2025</div>
<div class="t" style="left:2357px;top:663px;font-size:11px;color:#444;letter-spacing:-0.466px;">Live</div>
<div class="a" style="left:207px;top:679px;width:2224px;height:21px;background:#fff;border-bottom:1px solid #dcdcdc"></div>
<div class="t" style="left:211.6px;top:684px;font-size:11px;color:#444;letter-spacing:-0.714px;">TEST-777</div>
<div class="t" style="left:329.6px;top:684px;font-size:11px;color:#444;letter-spacing:-0.115px;">Aquarium</div>
<div class="t" style="left:427.6px;top:684px;font-size:11px;color:#444;letter-spacing:-0.164px;">Test-777</div>
<div class="t" style="left:1788.2px;top:684px;font-size:11px;color:#444;letter-spacing:-0.094px;">Liquid</div>
<div class="t" style="left:1886.2px;top:684px;font-size:11px;color:#444;letter-spacing:-0.125px;">Natural Product</div>
<div class="cb" style="left:2012px;top:682px;width:13px;height:13px;border-color:#a4a4a4"></div>
<div class="t" style="right:397.66px;top:684px;font-size:11px;color:#444;letter-spacing:-0.36px;">5</div>
<div class="t" style="left:2112px;top:684px;font-size:11px;color:#444;letter-spacing:-0.345px;">Scott Fisher SWF Consultan...</div>
<div class="t" style="left:2259px;top:684px;font-size:11px;color:#444;letter-spacing:-0.066px;">05/12/2025</div>
<div class="t" style="left:2357px;top:684px;font-size:11px;color:#444;letter-spacing:-0.466px;">Live</div>
<div class="a" style="left:207px;top:700px;width:2224px;height:20px;background:#f8f7fa;border-bottom:1px solid #dcdcdc"></div>
<div class="t" style="left:211.6px;top:705px;font-size:11px;color:#444;letter-spacing:-0.565px;">BULK-666</div>
<div class="t" style="left:329.6px;top:705px;font-size:11px;color:#444;letter-spacing:-0.089px;">Intermediate</div>
<div class="t" style="left:427.6px;top:705px;font-size:11px;color:#444;letter-spacing:-0.087px;">testing testing 123</div>
<div class="t" style="left:1788.2px;top:705px;font-size:11px;color:#444;letter-spacing:-0.215px;">Solid</div>
<div class="t" style="left:1886.2px;top:705px;font-size:11px;color:#444;letter-spacing:-0.597px;">Resin</div>
<div class="cb" style="left:2012px;top:703px;width:13px;height:13px;border-color:#a4a4a4"></div>
<div class="t" style="right:397.66px;top:705px;font-size:11px;color:#444;letter-spacing:-0.36px;">13</div>
<div class="t" style="left:2112px;top:705px;font-size:11px;color:#444;letter-spacing:-0.285px;">Dan Johnston</div>
<div class="t" style="left:2259px;top:705px;font-size:11px;color:#444;letter-spacing:-0.066px;">17/12/2025</div>
<div class="t" style="left:2357px;top:705px;font-size:11px;color:#444;letter-spacing:-0.466px;">Live</div>
<div class="a" style="left:207px;top:720px;width:2224px;height:21px;background:#fff;border-bottom:1px solid #dcdcdc"></div>
<div class="t" style="left:211.6px;top:725px;font-size:11px;color:#444;letter-spacing:-0.565px;">BULK-386</div>
<div class="t" style="left:329.6px;top:725px;font-size:11px;color:#444;letter-spacing:-0.089px;">Intermediate</div>
<div class="t" style="left:427.6px;top:725px;font-size:11px;color:#444;letter-spacing:-0.308px;">guinsvgsecge5645</div>
<div class="t" style="left:1788.2px;top:725px;font-size:11px;color:#444;letter-spacing:-0.215px;">Solid</div>
<div class="t" style="left:1886.2px;top:725px;font-size:11px;color:#444;letter-spacing:-0.192px;">Powder Mix</div>
<div class="cb" style="left:2012px;top:724px;width:13px;height:13px;border-color:#a4a4a4"></div>
<div class="t" style="right:397.66px;top:725px;font-size:11px;color:#444;letter-spacing:-0.36px;">8</div>
<div class="t" style="left:2112px;top:725px;font-size:11px;color:#444;letter-spacing:-0.285px;">Dan Johnston</div>
<div class="t" style="left:2259px;top:725px;font-size:11px;color:#444;letter-spacing:-0.066px;">08/12/2025</div>
<div class="t" style="left:2357px;top:725px;font-size:11px;color:#444;letter-spacing:-0.466px;">Live</div>
<div class="a" style="left:207px;top:741px;width:2224px;height:20px;background:#f8f7fa;border-bottom:1px solid #dcdcdc"></div>
<div class="t" style="left:211.6px;top:746px;font-size:11px;color:#444;letter-spacing:-0.714px;">TEST-005</div>
<div class="t" style="left:329.6px;top:746px;font-size:11px;color:#444;letter-spacing:-0.435px;">Koi Care</div>
<div class="t" style="left:427.6px;top:746px;font-size:11px;color:#444;letter-spacing:-0.674px;">TEST-9999</div>
<div class="t" style="left:1788.2px;top:746px;font-size:11px;color:#444;letter-spacing:-0.215px;">Solid</div>
<div class="t" style="left:1886.2px;top:746px;font-size:11px;color:#444;letter-spacing:-0.269px;">Pellet/Flake</div>
<div class="cb" style="left:2012px;top:744px;width:13px;height:13px;border-color:#a4a4a4"><svg style="left:0;top:0" width="11" height="11" viewBox="0 0 11 11"><path d="M1.3 5.4 L4.3 8.5 L9.6 2.5" fill="none" stroke="#333" stroke-width="1.7"/></svg></div>
<div class="t" style="right:397.66px;top:746px;font-size:11px;color:#444;letter-spacing:-0.36px;">6</div>
<div class="t" style="left:2112px;top:746px;font-size:11px;color:#444;letter-spacing:-0.345px;">Scott Fisher SWF Consultan...</div>
<div class="t" style="left:2259px;top:746px;font-size:11px;color:#444;letter-spacing:-0.066px;">08/12/2025</div>
<div class="t" style="left:2357px;top:746px;font-size:11px;color:#444;letter-spacing:-0.466px;">Live</div>
<div class="a" style="left:207px;top:761px;width:2224px;height:21px;background:#fff;border-bottom:1px solid #dcdcdc"></div>
<div class="t" style="left:211.6px;top:766px;font-size:11px;color:#444;letter-spacing:-0.565px;">BULK-909</div>
<div class="t" style="left:329.6px;top:766px;font-size:11px;color:#444;letter-spacing:-0.435px;">Koi Care</div>
<div class="t" style="left:427.6px;top:766px;font-size:11px;color:#444;letter-spacing:-0.224px;">sdfghvstvh4376</div>
<div class="t" style="left:1788.2px;top:766px;font-size:11px;color:#444;letter-spacing:-0.215px;">Solid</div>
<div class="t" style="left:1886.2px;top:766px;font-size:11px;color:#444;letter-spacing:-0.597px;">Resin</div>
<div class="cb" style="left:2012px;top:764px;width:13px;height:13px;border-color:#a4a4a4"></div>
<div class="t" style="right:397.66px;top:766px;font-size:11px;color:#444;letter-spacing:-0.36px;">12</div>
<div class="t" style="left:2112px;top:766px;font-size:11px;color:#444;letter-spacing:-0.345px;">Scott Fisher SWF Consultan...</div>
<div class="t" style="left:2259px;top:766px;font-size:11px;color:#444;letter-spacing:-0.066px;">12/12/2025</div>
<div class="t" style="left:2357px;top:766px;font-size:11px;color:#444;letter-spacing:-0.466px;">Live</div>
<div class="a" style="left:207px;top:309px;width:1px;height:473px;background:#d4d4d4"></div>
<div class="a" style="left:325px;top:309px;width:1px;height:473px;background:#d4d4d4"></div>
<div class="a" style="left:423px;top:309px;width:1px;height:473px;background:#d4d4d4"></div>
<div class="a" style="left:1783px;top:309px;width:1px;height:473px;background:#d4d4d4"></div>
<div class="a" style="left:1881px;top:309px;width:1px;height:473px;background:#d4d4d4"></div>
<div class="a" style="left:1979px;top:309px;width:1px;height:473px;background:#d4d4d4"></div>
<div class="a" style="left:2058px;top:309px;width:1px;height:473px;background:#d4d4d4"></div>
<div class="a" style="left:2107px;top:309px;width:1px;height:473px;background:#d4d4d4"></div>
<div class="a" style="left:2254px;top:309px;width:1px;height:473px;background:#d4d4d4"></div>
<div class="a" style="left:2352px;top:309px;width:1px;height:473px;background:#d4d4d4"></div>
<div class="a" style="left:192px;top:781px;width:2256px;height:4px;background:#e2e2e4"></div>
<svg style="left:198px;top:397px" width="5" height="9" viewBox="0 0 5 9"><path d="M0 0L4.5 4.5L0 9z" fill="#222"/></svg>
<div class="a" style="left:2432px;top:310px;width:15px;height:14px;border:1px solid #c8c8c8;background:#fff"></div>
<svg style="left:2436px;top:315px" width="7" height="4" viewBox="0 0 7 4"><path d="M0 4h7l-3.5-4z" fill="#222"/></svg>
<div class="a" style="left:2432px;top:325px;width:15px;height:275px;border:1px solid #c0c0c0;background:#fff"></div>
<div class="a" style="left:2432px;top:768px;width:15px;height:14px;border:1px solid #c8c8c8;background:#fff"></div>
<svg style="left:2436px;top:773px" width="7" height="4" viewBox="0 0 7 4"><path d="M0 0h7l-3.5 4z" fill="#222"/></svg>
<div class="a" style="left:189px;top:816px;width:2272px;height:6px;background:linear-gradient(#f1f2f4,#e6e8eb 50%)"></div>
<div class="hl" style="left:199px;top:832px;width:2251px"></div>
<div class="hl" style="left:199px;top:897px;width:2251px"></div>
<div class="a" style="left:222px;top:849px;width:151px;height:33px;background:#eff6ff;border:1px solid #5b9af6;border-top-color:#4a8cf2;border-bottom:2px solid #7fb0f8;border-radius:5px"></div>
<svg style="left:235.6px;top:858.6px;transform:scaleX(-1)" width="14" height="14.4" viewBox="0 0 14 14.4"><path d="M7 .8 L12.8 3.9 V10.5 L7 13.6 L1.2 10.5 V3.9 Z M1.2 3.9 L7 7 L12.8 3.9 M7 7 V13.6 M4 2.4 L9.9 5.5 V7.6" fill="none" stroke="#555" stroke-width="1.1" stroke-linejoin="round"/></svg>
<div class="t" style="left:260px;top:861px;font-size:11.5px;color:#1e40af;letter-spacing:-0.41px;-webkit-text-stroke:0.35px #1e40af">Selected: Ammonia 2</div>
<div class="sep" style="left:459px;top:848px;height:35px"></div>
<svg style="left:470px;top:851px" width="27" height="28" viewBox="0 0 27 28"><path d="M4.5 0.5h4v4h4v4h-4v4h-4v-4h-4v-4h4z" fill="#5b9bd8" stroke="#2f6fb0" stroke-width=".8"/><rect x="15" y="1.0" width="11" height="1.3" fill="#8c98a8"/><rect x="15" y="3.6" width="11" height="1.3" fill="#8c98a8"/><rect x="15" y="6.2" width="11" height="1.3" fill="#8c98a8"/><rect x="15" y="8.8" width="11" height="1.3" fill="#8c98a8"/><rect x="15" y="11.4" width="11" height="1.3" fill="#8c98a8"/><path d="M4.5 15.5h4v4h4v4h-4v4h-4v-4h-4v-4h4z" fill="#5b9bd8" stroke="#2f6fb0" stroke-width=".8"/><rect x="15" y="16.0" width="11" height="1.3" fill="#8c98a8"/><rect x="15" y="18.6" width="11" height="1.3" fill="#8c98a8"/><rect x="15" y="21.2" width="11" height="1.3" fill="#8c98a8"/><rect x="15" y="23.8" width="11" height="1.3" fill="#8c98a8"/><rect x="15" y="26.4" width="11" height="1.3" fill="#8c98a8"/></svg>
<div class="t" style="left:502.4px;top:860px;font-size:12px;color:#444;letter-spacing:-0.148px;">Manage Composition</div>
<div class="sep" style="left:622px;top:848px;height:35px"></div>
<div class="t" style="left:630.8px;top:861px;font-size:12px;color:#444;letter-spacing:-0.312px;">Show Inactive</div>
<div class="cb" style="left:705px;top:858px"></div>
<div class="sep" style="left:727px;top:848px;height:35px"></div>
<svg style="left:736px;top:850px" width="30" height="29" viewBox="0 0 30 29"><path d="M6 1h12l6 6v19H6z" fill="#fff" stroke="#7a86b8" stroke-width="1"/><path d="M18 1v6h6" fill="#e8ecf8" stroke="#7a86b8" stroke-width="1"/><rect x="0" y="5" width="14" height="8" fill="#2f9a2f"/><text x="1.2" y="11.6" font-family="Liberation Sans" font-size="6.5" font-weight="700" fill="#fff">XLS</text><rect x="16" y="16" width="13" height="13" rx="1" fill="#2b3f88"/><rect x="18.5" y="16" width="8" height="5" fill="#dfe6f8"/><rect x="19" y="23.5" width="7" height="5.5" fill="#8fa2d8"/></svg>
<div class="a" style="left:195px;top:905px;width:2260px;height:348px;border:1px solid #f2f2f4;border-radius:6px;background:#fff"></div>
<div class="t" style="left:216.5px;top:921px;font-size:10px;color:#8c8c8c;letter-spacing:-0.051px;">Drag a column header here to group by that column</div>
<div class="a" style="left:2202px;top:914px;width:244px;height:22px;border:1px solid #a8a8a8;background:#fff"></div>
<div class="t" style="left:2207px;top:920px;font-size:10.5px;color:#a6a6a6;letter-spacing:-0.456px;">Search</div>
<svg style="left:2433px;top:924px" width="8" height="4" viewBox="0 0 8 4"><path d="M0 0h8l-4 4z" fill="#222"/></svg>
<div class="a" style="left:197px;top:942px;width:2256px;height:22px;background:#fff;border-top:1px solid #a6a6a6;border-bottom:1px solid #a8a8a8"></div>
<div class="a" style="left:212px;top:943px;width:1px;height:20px;background:#b8b8b8"></div>
<div class="t" style="left:216.8px;top:948px;font-size:12px;color:#333;letter-spacing:-0.426px;">Code</div>
<div class="a" style="left:349px;top:943px;width:1px;height:20px;background:#b8b8b8"></div>
<div class="t" style="left:353.8px;top:948px;font-size:12px;color:#333;letter-spacing:-0.269px;">Category</div>
<div class="a" style="left:447px;top:943px;width:1px;height:20px;background:#b8b8b8"></div>
<div class="t" style="left:451.8px;top:948px;font-size:12px;color:#333;letter-spacing:-0.335px;">Type</div>
<div class="a" style="left:526px;top:943px;width:1px;height:20px;background:#b8b8b8"></div>
<div class="t" style="left:530.8px;top:948px;font-size:12px;color:#333;letter-spacing:-0.312px;">Name</div>
<div class="a" style="left:2121px;top:943px;width:1px;height:20px;background:#b8b8b8"></div>
<div class="t" style="left:2125.8px;top:948px;font-size:12px;color:#333;letter-spacing:-0.616px;">CAS No</div>
<div class="a" style="left:2269px;top:943px;width:1px;height:20px;background:#b8b8b8"></div>
<div class="t" style="left:2273.8px;top:948px;font-size:12px;color:#333;letter-spacing:-0.176px;">% Composition</div>
<div class="a" style="left:2386px;top:943px;width:1px;height:20px;background:#b8b8b8"></div>
<div class="t" style="left:2390.8px;top:948px;font-size:12px;color:#333;letter-spacing:-0.733px;">API</div>
<div class="a" style="left:2436px;top:943px;width:1px;height:20px;background:#b8b8b8"></div>
<svg style="left:433px;top:951px" width="8" height="4" viewBox="0 0 8 4"><path d="M0 4h8l-4-4z" fill="#222"/></svg>
<svg style="left:511px;top:951px" width="8" height="4" viewBox="0 0 8 4"><path d="M0 4h8l-4-4z" fill="#222"/></svg>
<svg style="left:2107px;top:951px" width="8" height="4" viewBox="0 0 8 4"><path d="M0 4h8l-4-4z" fill="#222"/></svg>
<div class="a" style="left:212px;top:964px;width:2224px;height:22px;background:#e4f0fa;border-bottom:1px solid #dcdcdc"></div>
<div class="t" style="left:216.7px;top:970px;font-size:11px;color:#444;letter-spacing:-0.459px;">CHEM-102</div>
<div class="t" style="left:353.7px;top:970px;font-size:11px;color:#444;letter-spacing:-0.361px;">Chemical</div>
<div class="t" style="left:451.7px;top:970px;font-size:11px;color:#444;letter-spacing:-0.094px;">Liquid</div>
<div class="t" style="left:530.7px;top:970px;font-size:11px;color:#444;letter-spacing:-0.222px;">Buffer 456</div>
<div class="t" style="left:2125.7px;top:970px;font-size:11px;color:#444;letter-spacing:-0.36px;">2576456345</div>
<div class="t" style="right:118.61px;top:970px;font-size:11px;color:#444;letter-spacing:-0.414px;">50.0000</div>
<div class="cb" style="left:2405px;top:968px;width:13px;height:13px;border-color:#dcdcdc;background:#fafafa"></div>
<div class="a" style="left:212px;top:986px;width:2224px;height:23px;background:#f8f7fa;border-bottom:1px solid #dcdcdc"></div>
<div class="t" style="left:216.7px;top:993px;font-size:11px;color:#444;letter-spacing:-0.459px;">CHEM-103</div>
<div class="t" style="left:353.7px;top:993px;font-size:11px;color:#444;letter-spacing:-0.361px;">Chemical</div>
<div class="t" style="left:451.7px;top:993px;font-size:11px;color:#444;letter-spacing:-0.215px;">Solid</div>
<div class="t" style="left:530.7px;top:993px;font-size:11px;color:#444;letter-spacing:-0.49px;">Bleach</div>
<div class="t" style="left:2125.7px;top:993px;font-size:11px;color:#444;letter-spacing:-0.36px;">63453245</div>
<div class="t" style="right:118.61px;top:993px;font-size:11px;color:#444;letter-spacing:-0.414px;">50.0000</div>
<div class="cb" style="left:2405px;top:990px;width:13px;height:13px;border-color:#dcdcdc;background:#fafafa"></div>
<div class="a" style="left:212px;top:1009px;width:2224px;height:23px;background:#fff;border-bottom:1px solid #dcdcdc"></div>
<div class="t" style="left:216.7px;top:1016px;font-size:11px;color:#444;letter-spacing:-0.459px;">CHEM-905</div>
<div class="t" style="left:353.7px;top:1016px;font-size:11px;color:#444;letter-spacing:-0.361px;">Chemical</div>
<div class="t" style="left:451.7px;top:1016px;font-size:11px;color:#444;letter-spacing:-0.215px;">Solid</div>
<div class="t" style="left:530.7px;top:1016px;font-size:11px;color:#444;letter-spacing:-0.208px;">test789</div>
<div class="t" style="left:2125.7px;top:1016px;font-size:11px;color:#444;letter-spacing:-0.36px;">789</div>
<div class="t" style="right:118.62px;top:1016px;font-size:11px;color:#444;letter-spacing:-0.424px;">1.0000</div>
<div class="cb" style="left:2405px;top:1013px;width:13px;height:13px;border-color:#dcdcdc;background:#fafafa"></div>
<div class="a" style="left:212px;top:964px;width:1px;height:68px;background:#d4d4d4"></div>
<div class="a" style="left:349px;top:964px;width:1px;height:68px;background:#d4d4d4"></div>
<div class="a" style="left:447px;top:964px;width:1px;height:68px;background:#d4d4d4"></div>
<div class="a" style="left:526px;top:964px;width:1px;height:68px;background:#d4d4d4"></div>
<div class="a" style="left:2121px;top:964px;width:1px;height:68px;background:#d4d4d4"></div>
<div class="a" style="left:2269px;top:964px;width:1px;height:68px;background:#d4d4d4"></div>
<div class="a" style="left:2386px;top:964px;width:1px;height:68px;background:#d4d4d4"></div>
<svg style="left:203px;top:971px" width="5" height="9" viewBox="0 0 5 9"><path d="M0 0L4.5 4.5L0 9z" fill="#222"/></svg>
<div class="a" style="left:2437px;top:965px;width:15px;height:15px;border:1px solid #dcdcdc;background:#fff"></div>
<svg style="left:2441px;top:970px" width="7" height="4" viewBox="0 0 7 4"><path d="M0 4h7l-3.5-4z" fill="#222"/></svg>
<div class="a" style="left:2437px;top:1205px;width:15px;height:15px;border:1px solid #dcdcdc;background:#fff"></div>
<svg style="left:2441px;top:1211px" width="7" height="4" viewBox="0 0 7 4"><path d="M0 0h7l-3.5 4z" fill="#222"/></svg>
<div class="a" style="left:197px;top:1221px;width:2256px;height:1px;background:#cfcfcf"></div>
<div class="a" style="left:2272px;top:1225px;width:112px;height:22px;border:1px solid #d4d4d4;background:#fff"></div>
<div class="t" style="right:120.22px;top:1231px;font-size:11px;color:#444;letter-spacing:-0.224px;">Total 101.0000</div>
<div class="a" style="left:12px;top:1285px;width:2480px;height:4px;background:#fcfcfc"></div>
<div class="a" style="left:11px;top:1290px;width:2481px;height:61px;background:#f5f5f5;border:1px solid #9a9a9a;border-top:2px solid #a8a8a8;border-radius:4px;box-shadow:inset 0 0 0 1px #fff"></div>
<div class="sep" style="left:1045px;top:1293px;width:2px;height:56px;background:#dfdfdf"></div>
<div class="sep" style="left:1207px;top:1293px;width:2px;height:56px;background:#dfdfdf"></div>
<div class="sep" style="left:1346px;top:1293px;width:2px;height:56px;background:#dfdfdf"></div>
<div class="sep" style="left:1480px;top:1293px;width:2px;height:56px;background:#dfdfdf"></div>
<svg style="left:925px;top:1300px" width="35" height="40" viewBox="925 1300 35 40"><defs><linearGradient id="cbp" x1="0" y1="0" x2="0" y2="1"><stop offset="0" stop-color="#e8e8ea"/><stop offset=".35" stop-color="#ffffff"/><stop offset="1" stop-color="#f4f6fa"/></linearGradient></defs><rect x="932.2" y="1309.2" width="21" height="25.2" rx="2.2" fill="#6c98d4" stroke="#3a64a8" stroke-width="1"/><rect x="934.6" y="1312" width="16.2" height="20" fill="url(#cbp)" stroke="#c2cce0" stroke-width=".5"/><path d="M937.2 1312.2 V1309.6 Q937.2 1308.4 938.6 1308.2 L940.6 1307.8 Q940.4 1305.2 942.7 1305.2 Q945 1305.2 944.8 1307.8 L946.8 1308.2 Q948.2 1308.4 948.2 1309.6 V1312.2 Z" fill="#bdbdbd" stroke="#6e6e6e" stroke-width=".8"/><rect x="941.7" y="1306.4" width="2" height="1.4" fill="#eee"/><rect x="937.6" y="1317.6" width="2.6" height="2.6" fill="none" stroke="#8a8a8a" stroke-width=".7"/><path d="M942 1318.2h6.6M942 1320.8h6.6M943.6 1325h5M943.6 1327.6h5" stroke="#8e8e8e" stroke-width=".9"/><path d="M934.8 1324.6 L939 1328 L945.8 1317" fill="none" stroke="#c0181c" stroke-width="2.1"/></svg>
<div class="t" style="left:961px;top:1316px;font-size:12px;color:#444;letter-spacing:-0.284px;">Job Manager</div>
<svg style="left:1065px;top:1305px" width="30" height="31" viewBox="0 0 30 31"><defs><linearGradient id="hg" x1="0" y1="0" x2="0" y2="1"><stop offset="0" stop-color="#fbe29a"/><stop offset="1" stop-color="#eab040"/></linearGradient></defs><polygon points="16.6,8.5 12.8,15.1 5.2,15.1 1.4,8.5 5.2,1.9 12.8,1.9" fill="url(#hg)" stroke="#ae7426" stroke-width="1"/><polygon points="29.1,15.5 25.3,22.1 17.7,22.1 13.9,15.5 17.7,8.9 25.3,8.9" fill="url(#hg)" stroke="#ae7426" stroke-width="1"/><polygon points="16.6,22.5 12.8,29.1 5.2,29.1 1.4,22.5 5.2,15.9 12.8,15.9" fill="url(#hg)" stroke="#ae7426" stroke-width="1"/></svg>
<div class="t" style="left:1098.4px;top:1316px;font-size:12px;color:#444;letter-spacing:-0.232px;">Stock Movements</div>
<svg style="left:1220px;top:1296px" width="190" height="50" viewBox="1220 1296 190 50"><defs><linearGradient id="pbt" x1="0" y1="0" x2="0" y2="1"><stop offset="0" stop-color="#6fb4f6"/><stop offset="1" stop-color="#3c82dc"/></linearGradient><linearGradient id="sdt" x1="0" y1="0" x2="0" y2="1"><stop offset="0" stop-color="#a6c8f2"/><stop offset="1" stop-color="#6c9fe0"/></linearGradient><linearGradient id="gr" x1="0" y1="0" x2="0" y2="1"><stop offset="0" stop-color="#f2f3f6"/><stop offset="1" stop-color="#b4b9c6"/></linearGradient></defs><rect x="1228.4" y="1307.6" width="22" height="21" rx="1.6" fill="#fff" stroke="#2f72d0" stroke-width="1"/><path d="M1228.4 1313.8 V1309.2 Q1228.4 1307.6 1230 1307.6 H1248.8 Q1250.4 1307.6 1250.4 1309.2 V1313.8 Z" fill="url(#pbt)" stroke="#2f72d0" stroke-width=".8"/><circle cx="1247" cy="1310.5" r="1.7" fill="#e83a3a"/><rect x="1246" y="1310.1" width="2" height=".8" fill="#fff"/><path d="M1231 1316.4h3.4M1231 1319.4h3.4M1231 1322.4h3.4M1231 1325.3h3.4" stroke="#666" stroke-width="1"/><path d="M1236.9 1316.4h10.5M1236.9 1319.4h10.5M1236.9 1322.4h6M1236.9 1325.3h5" stroke="#444" stroke-width="1.1"/><path d="M1241.9 1325.2 L1253 1324.9 L1252.8 1334.6 L1241.9 1334.6 Z" fill="#43b21c"/><path d="M1241.9 1325.2 L1244.6 1321.8 L1255.5 1321.4 L1253 1324.9 Z" fill="#8fe058"/><path d="M1253 1324.9 L1255.5 1321.4 L1255.5 1331 L1252.8 1334.6 Z" fill="#1f7f0c"/><path d="M1241.9 1325.2 L1244.6 1321.8 L1255.5 1321.4 L1255.5 1331 L1252.8 1334.6 L1241.9 1334.6 Z" fill="none" stroke="#2a7a14" stroke-width=".5"/><circle cx="1287.5" cy="1305.5" r="5.6" fill="#c65a3c"/><rect x="1366.6" y="1305.5" width="23" height="23.2" rx="1.8" fill="#e6edf9" stroke="#86a4dc" stroke-width="1"/><path d="M1366.6 1314.6 V1307.2 Q1366.6 1305.5 1368.3 1305.5 H1387.9 Q1389.6 1305.5 1389.6 1307.2 V1314.6 Z" fill="url(#sdt)" stroke="#86a4dc" stroke-width=".8"/><path d="M1368.6 1308.2 h7.6 l-3.8 4.1 z" fill="#2f62b8"/><g transform="translate(1386,1326.4) scale(.88)"><path d="M-1.7 -9.3 h3.4 l.5 2.3 l2 .8 l2 -1.3 l2.4 2.4 l-1.3 2 l.8 2 l2.3 .5 v3.4 l-2.3 .5 l-.8 2 l1.3 2 l-2.4 2.4 l-2 -1.3 l-2 .8 l-.5 2.3 h-3.4 l-.5 -2.3 l-2 -.8 l-2 1.3 l-2.4 -2.4 l1.3 -2 l-.8 -2 l-2.3 -.5 v-3.4 l2.3 -.5 l.8 -2 l-1.3 -2 l2.4 -2.4 l2 1.3 l2 -.8 z" fill="url(#gr)" stroke="#7c8498" stroke-width=".9"/><circle r="2.8" fill="#f4f4f4" stroke="#7c8498" stroke-width="1"/></g></svg>
<div class="t" style="left:1260.4px;top:1316px;font-size:12px;color:#444;letter-spacing:-0.174px;">Product Build</div>
<div class="t" style="left:1399.4px;top:1316px;font-size:12px;color:#444;letter-spacing:-0.427px;">System Data</div>
<svg style="left:1505px;top:1309px" width="21" height="25" viewBox="0 0 21 25"><path d="M5 11 V7 a5.5 5.5 0 0 1 11 0 V11" fill="none" stroke="#d8a868" stroke-width="2.6"/><rect x="0" y="10.5" width="21" height="14.5" rx="1.5" fill="#dca764"/><circle cx="10.5" cy="16" r="2" fill="#fff"/><rect x="9.5" y="16" width="2" height="5" fill="#fff"/></svg>
<div class="t" style="left:1534.3px;top:1316px;font-size:12px;color:#444;letter-spacing:-0.147px;">Log Out</div>
<div class="a" style="left:771px;top:175px;width:945px;height:968px;background:#f8f8f8;border:1px solid #2582d6"></div>
<svg style="left:775.9px;top:180.5px" width="20" height="20" viewBox="0 0 20 20"><path d="M3.8 12.6 L3.8 10 C5 8 6.4 5 7.4 3.5 C8.8 6.4 11 9.2 13.5 9.7 C15 9.9 16.5 9.5 17.7 8.8 C16.9 10.9 15 11.9 13.4 11.8 C11 11.6 9 9.5 7.6 7.4 C6.2 9 5 11 3.8 12.6 Z" fill="#f0309c"/><path d="M3.8 15.6 L3.8 12.9 C5 11.2 6.3 9 7.6 7.5 C9 10 11 12.6 13.5 13 C14.8 13.1 15.8 12.9 16.6 12.5 C15.9 14 14.5 14.7 13.2 14.6 C11 14.3 9.2 12.6 7.9 10.8 C6.5 12 5 14 3.8 15.6Z" fill="#38c8f4"/><path d="M3.8 19.6 L3.8 16.4 C5 14.8 6.5 12.4 7.9 10.9 C9.5 13.5 11.5 16.2 14 16.6 C16 16.8 17.8 15.6 19 14 C18.4 16.7 16.2 18.7 13.8 18.5 C11.5 18.2 9.8 16.2 8.3 14.2 C7 16 5.5 18.5 3.8 19.6 Z" fill="#2f86c8"/><path d="M6.2 13 L7.9 10.9 L10 13.6 L8.3 14.2 Z" fill="#5aa4dc"/></svg>
<div class="a" style="left:1111px;top:175px;width:264px;height:22px;background:#1f1f1f"></div>
<div class="a" style="left:1114px;top:177px;width:5px;height:18px;background-image:radial-gradient(#666 0.7px,transparent 0.8px);background-size:2.5px 2.5px"></div>
<svg style="left:1126px;top:178.9px" width="19" height="15" viewBox="0 0 19 15"><path d="M1 1h11M1 1v13h5M1 5h10" fill="none" stroke="#f0f0f0" stroke-width="1.6"/><path d="M4 8h3M4 11h2" stroke="#f0f0f0" stroke-width="1.2"/><circle cx="12.5" cy="10" r="3.2" fill="none" stroke="#f0f0f0" stroke-width="1.3"/><path d="M12.5 5v3M12.5 12v3M7.5 10h3M14.5 10h3.5" stroke="#f0f0f0" stroke-width="1.3"/></svg>
<svg style="left:1152px;top:180.9px" width="17" height="11" viewBox="0 0 17 11"><rect x=".7" y="1.2" width="11" height="8.6" rx="1" fill="none" stroke="#f0f0f0" stroke-width="1.4"/><path d="M12 4.2 L16 1.6 V9.4 L12 6.8" fill="none" stroke="#f0f0f0" stroke-width="1.3"/></svg>
<div class="a" style="left:1176px;top:178px;width:1px;height:16px;background:#555"></div>
<svg style="left:1180px;top:177.9px" width="18" height="17" viewBox="0 0 18 17"><path d="M3 6V1.2h14.4v9.6H12" fill="none" stroke="#f0f0f0" stroke-width="1.3"/><path d="M5 5.5 L5 15.5 L7.6 13.2 L9.6 17 L11.2 16.2 L9.2 12.4 L12.8 12.2 Z" fill="#f0f0f0"/></svg>
<svg style="left:1208px;top:178.9px" width="15" height="15" viewBox="0 0 15 15"><rect x=".8" y=".8" width="13.4" height="13.4" fill="none" stroke="#f0f0f0" stroke-width="1.4"/><rect x="4.2" y="4.2" width="6.6" height="6.6" fill="none" stroke="#f0f0f0" stroke-width="1.3"/></svg>
<svg style="left:1232px;top:177.9px" width="18" height="17" viewBox="0 0 18 17"><path d="M1 3.5V1.2h3M7 1.2h4M14 1.2h3v2.3M17 6.5v3.8h-3M1 6.5v3.8h2.5" fill="none" stroke="#f0f0f0" stroke-width="1.3"/><path d="M6 5.5 L6 15.5 L8.6 13.2 L10.6 17 L12.2 16.2 L10.2 12.4 L13.8 12.2 Z" fill="#f0f0f0"/></svg>
<div class="a" style="left:1257px;top:178px;width:1px;height:16px;background:#555"></div>
<div class="t" style="left:1263px;top:179.0px;font-size:13px;font-weight:700;color:#f0f0f0;letter-spacing:6.5px;transform:scaleX(.8);transform-origin:0 0">{}</div>
<div class="a" style="left:1267.2px;top:182.6px;width:8px;height:8px;border-radius:4px;background:#e01818"></div>
<svg style="left:1269.2px;top:184.6px" width="4" height="4" viewBox="0 0 4 4"><path d="M0 0L4 4M4 0L0 4" stroke="#fff" stroke-width="1.2"/></svg>
<div class="t" style="left:1280px;top:180.5px;font-size:12px;color:#f0f0f0;letter-spacing:-0.3px">62</div>
<svg style="left:1302px;top:178.9px" width="15" height="15" viewBox="0 0 15 15"><circle cx="7.5" cy="7.5" r="6.6" fill="none" stroke="#f0f0f0" stroke-width="1.2"/><circle cx="7.5" cy="4" r="1.2" fill="#f0f0f0"/><path d="M3.6 6.2h7.8M7.5 6.2v3M7.5 9 L5.2 12.4M7.5 9 L9.8 12.4" stroke="#f0f0f0" stroke-width="1.2" fill="none"/></svg>
<div class="a" style="left:1324px;top:178px;width:1px;height:16px;background:#555"></div>
<svg style="left:1330px;top:178.4px" width="16" height="16" viewBox="0 0 16 16"><circle cx="8" cy="8" r="7.3" fill="#fff" stroke="#6cc46c" stroke-width="1.2"/><path d="M4.2 8.4 L7 11.4 L11.6 4.6" fill="none" stroke="#2f9a2f" stroke-width="1.7"/></svg>
<div class="a" style="left:1352px;top:178px;width:1px;height:16px;background:#555"></div>
<svg style="left:1361px;top:181.4px" width="6" height="10" viewBox="0 0 6 10"><path d="M5 .8 L1 5 L5 9.2" fill="none" stroke="#8a8a8a" stroke-width="1"/></svg>
<div class="a" style="left:1597px;top:192px;width:11px;height:1px;background:#333"></div>
<div class="a" style="left:1643px;top:187px;width:10px;height:10px;border:1px solid #333"></div>
<svg style="left:1688px;top:187px" width="10" height="10" viewBox="0 0 10 10"><path d="M.3 .3L9.7 9.7M9.7 .3L.3 9.7" stroke="#222" stroke-width="1.1"/></svg>
<div class="a" style="left:777px;top:208px;width:933px;height:884px;background:#f5f5f5"></div>
<div class="a" style="left:0;top:0;width:2500px;height:1082px;overflow:hidden">
<div class="a" style="left:799px;top:230px;width:872px;height:282px;border:1px solid #ababab;background:#f5f5f5"></div>
<div class="a" style="left:800px;top:231px;width:870px;height:21px;background:#efefef;border-bottom:1px solid #ababab"></div>
<div class="t" style="left:811px;top:236px;font-size:12px;color:#3a3a3a;letter-spacing:-0.156px;">General Information</div>
<div class="t" style="right:1608.97px;top:268px;font-size:12px;color:#3a3a3a;letter-spacing:-0.469px;">Status:</div>
<div class="a" style="left:894px;top:263px;width:128px;height:21px;background:#fdf9f0;border:1px solid #ababab"></div>
<div class="t" style="left:899.2px;top:269px;font-size:12px;color:#3a3a3a;letter-spacing:-0.508px;">Live</div>
<svg style="left:1009px;top:272px" width="8" height="4" viewBox="0 0 8 4"><path d="M0 0h8l-4 4z" fill="#333"/></svg>
<div class="t" style="right:1608.93px;top:294px;font-size:12px;color:#3a3a3a;letter-spacing:-0.43px;">Type:</div>
<div class="a" style="left:894px;top:288px;width:197px;height:21px;background:#fdf9f0;border:1px solid #ababab"></div>
<div class="t" style="left:899.2px;top:294px;font-size:12px;color:#3a3a3a;letter-spacing:-0.103px;">Liquid</div>
<svg style="left:1078px;top:297px" width="8" height="4" viewBox="0 0 8 4"><path d="M0 0h8l-4 4z" fill="#333"/></svg>
<svg style="left:1061px;top:294px" width="9" height="9" viewBox="0 0 9 9"><path d="M3.6 0h1.8v3.6h3.6v1.8h-3.6v3.6h-1.8v-3.6h-3.6v-1.8h3.6z" fill="#333"/></svg>
<div class="t" style="right:1608.72px;top:319px;font-size:12px;color:#3a3a3a;letter-spacing:-0.225px;">In-house code:</div>
<div class="a" style="left:894px;top:314px;width:246px;height:21px;background:#fdf9f0;border:1px solid #ababab"></div>
<div class="t" style="left:899.2px;top:320px;font-size:12px;color:#3a3a3a;letter-spacing:-0.616px;">BULK-902</div>
<div class="t" style="right:1609.12px;top:345px;font-size:12px;color:#3a3a3a;letter-spacing:-0.622px;">Range:</div>
<div class="a" style="left:894px;top:339px;width:197px;height:21px;background:#fdf9f0;border:1px solid #ababab"></div>
<div class="t" style="left:899.2px;top:345px;font-size:12px;color:#3a3a3a;letter-spacing:-0.191px;">Test Kit</div>
<svg style="left:1078px;top:348px" width="8" height="4" viewBox="0 0 8 4"><path d="M0 0h8l-4 4z" fill="#333"/></svg>
<svg style="left:1061px;top:345px" width="9" height="9" viewBox="0 0 9 9"><path d="M3.6 0h1.8v3.6h3.6v1.8h-3.6v3.6h-1.8v-3.6h-3.6v-1.8h3.6z" fill="#333"/></svg>
<div class="t" style="right:1608.76px;top:370px;font-size:12px;color:#3a3a3a;letter-spacing:-0.262px;">In-house name:</div>
<div class="a" style="left:894px;top:365px;width:246px;height:21px;background:#fdf9f0;border:1px solid #ababab"></div>
<div class="t" style="left:899.2px;top:371px;font-size:12px;color:#3a3a3a;letter-spacing:-0.166px;">Ammonia 2</div>
<div class="t" style="right:1609.66px;top:396px;font-size:12px;color:#3a3a3a;letter-spacing:-1.162px;">ESPA:</div>
<div class="cb" style="left:894px;top:394px;border-color:#a0a0a0"></div>
<div class="t" style="right:1608.94px;top:422px;font-size:12px;color:#3a3a3a;letter-spacing:-0.444px;">Form:</div>
<div class="a" style="left:894px;top:416px;width:246px;height:21px;background:#fdf9f0;border:1px solid #ababab"></div>
<div class="t" style="left:899.2px;top:422px;font-size:12px;color:#3a3a3a;letter-spacing:-0.103px;">Liquid</div>
<svg style="left:1127px;top:425px" width="8" height="4" viewBox="0 0 8 4"><path d="M0 0h8l-4 4z" fill="#333"/></svg>
<svg style="left:1110px;top:422px" width="9" height="9" viewBox="0 0 9 9"><path d="M3.6 0h1.8v3.6h3.6v1.8h-3.6v3.6h-1.8v-3.6h-3.6v-1.8h3.6z" fill="#333"/></svg>
<div class="t" style="right:1608.95px;top:466px;font-size:12px;color:#3a3a3a;letter-spacing:-0.454px;">Purpose:</div>
<div class="a" style="left:894px;top:441px;width:344px;height:59px;background:#fdf9f0;border:1px solid #ababab"></div>
<div class="t" style="left:899.2px;top:447px;font-size:12px;color:#3a3a3a;letter-spacing:-0.413px;">Reagent</div>
<div class="a" style="left:799px;top:550px;width:872px;height:264px;border:1px solid #ababab;background:#f5f5f5"></div>
<div class="a" style="left:800px;top:551px;width:870px;height:21px;background:#efefef;border-bottom:1px solid #ababab"></div>
<div class="t" style="left:811px;top:556px;font-size:12px;color:#3a3a3a;letter-spacing:-0.161px;">Quantitative Properties</div>
<div class="t" style="left:815.8px;top:590px;font-size:11px;font-style:italic;color:#555;letter-spacing:-0.38px">Add properties as needed. Examples: Density, pH, Refractive Index, etc.</div>
<div class="a" style="left:811px;top:621px;width:98px;height:25px;background:#10b981;border:1px solid #5c9c88"></div>
<div class="t" style="left:820.5px;top:628px;font-size:12px;color:#fff;letter-spacing:-0.013px;">+ Add Property</div>
<div class="a" style="left:914px;top:621px;width:115px;height:25px;background:#ef4444;border:1px solid #b07070"></div>
<div class="t" style="left:923px;top:628px;font-size:12px;color:#fff;letter-spacing:-0.349px;">- Remove Selected</div>
<div class="a" style="left:811px;top:655px;width:848px;height:147px;border:1px solid #ababab;background:#fff"></div>
<div class="a" style="left:812px;top:656px;width:846px;height:37px;background:#efefef;border-bottom:1px solid #ababab"></div>
<div class="t" style="left:830.8px;top:669px;font-size:11px;color:#8c8c8c;letter-spacing:-0.03px;">Drag a column header here to group by that column</div>
<svg style="left:1637px;top:667px" width="14" height="14" viewBox="0 0 14 14"><circle cx="5.6" cy="5.6" r="4.6" fill="none" stroke="#333" stroke-width="1.4"/><path d="M9 9 L13.2 13.2" stroke="#333" stroke-width="1.9"/></svg>
<div class="a" style="left:812px;top:693px;width:846px;height:21px;background:#f7f7f7;border-bottom:1px solid #9c9c9c"></div>
<div class="a" style="left:827px;top:693px;width:1px;height:20px;background:#b4b4b4"></div>
<div class="t" style="left:831.8px;top:698px;font-size:12px;color:#3a3a3a;letter-spacing:-0.213px;">Property Name</div>
<div class="a" style="left:1317px;top:693px;width:1px;height:20px;background:#b4b4b4"></div>
<div class="t" style="left:1321.8px;top:698px;font-size:12px;color:#3a3a3a;letter-spacing:-0.225px;">Value</div>
<div class="a" style="left:1642px;top:693px;width:1px;height:20px;background:#b4b4b4"></div>
<div class="a" style="left:1643px;top:714px;width:15px;height:87px;background:#f0f0f0"></div>
<div class="a" style="left:1643px;top:715px;width:15px;height:15px;border:1px solid #d4d4d4;background:#fff"></div><svg style="left:1647.0px;top:720.5px" width="7" height="4" viewBox="0 0 7 4"><path d="M0 4h7l-3.5-4z" fill="#222"/></svg>
<div class="a" style="left:1643px;top:785px;width:15px;height:15px;border:1px solid #d4d4d4;background:#fff"></div><svg style="left:1647.0px;top:790.5px" width="7" height="4" viewBox="0 0 7 4"><path d="M0 0h7l-3.5 4z" fill="#222"/></svg>
<div class="a" style="left:827px;top:714px;width:815px;height:20px;border-bottom:1px solid #dcdcdc;border-left:1px solid #d6d6d6"></div>
<div class="a" style="left:1317px;top:714px;width:1px;height:19px;background:#d6d6d6"></div>
<div class="t" style="left:831.8px;top:719px;font-size:12px;color:#3a3a3a;letter-spacing:-0.097px;">Density (g/ml)</div>
<div class="t" style="right:862.46px;top:719px;font-size:12px;color:#3a3a3a;letter-spacing:-0.462px;">1.5000</div>
<div class="a" style="left:799px;top:852px;width:872px;height:264px;border:1px solid #ababab;background:#f5f5f5"></div>
<div class="a" style="left:800px;top:853px;width:870px;height:21px;background:#efefef;border-bottom:1px solid #ababab"></div>
<div class="t" style="left:811px;top:858px;font-size:12px;color:#3a3a3a;letter-spacing:-0.185px;">Qualitative Properties</div>
<div class="t" style="left:815.8px;top:892px;font-size:11px;font-style:italic;color:#555;letter-spacing:-0.38px">Add qualitative observations: Appearance, Odour, Colour, etc.</div>
<div class="a" style="left:811px;top:923px;width:98px;height:25px;background:#10b981;border:1px solid #5c9c88"></div>
<div class="t" style="left:820.5px;top:930px;font-size:12px;color:#fff;letter-spacing:-0.013px;">+ Add Property</div>
<div class="a" style="left:914px;top:923px;width:115px;height:25px;background:#ef4444;border:1px solid #b07070"></div>
<div class="t" style="left:923px;top:930px;font-size:12px;color:#fff;letter-spacing:-0.349px;">- Remove Selected</div>
<div class="a" style="left:811px;top:957px;width:848px;height:147px;border:1px solid #ababab;background:#fff"></div>
<div class="a" style="left:812px;top:958px;width:846px;height:37px;background:#efefef;border-bottom:1px solid #ababab"></div>
<div class="t" style="left:830.8px;top:971px;font-size:11px;color:#8c8c8c;letter-spacing:-0.03px;">Drag a column header here to group by that column</div>
<svg style="left:1637px;top:969px" width="14" height="14" viewBox="0 0 14 14"><circle cx="5.6" cy="5.6" r="4.6" fill="none" stroke="#333" stroke-width="1.4"/><path d="M9 9 L13.2 13.2" stroke="#333" stroke-width="1.9"/></svg>
<div class="a" style="left:812px;top:995px;width:846px;height:21px;background:#f7f7f7;border-bottom:1px solid #9c9c9c"></div>
<div class="a" style="left:827px;top:995px;width:1px;height:20px;background:#b4b4b4"></div>
<div class="t" style="left:831.8px;top:1000px;font-size:12px;color:#3a3a3a;letter-spacing:-0.172px;">Property</div>
<div class="a" style="left:974px;top:995px;width:1px;height:20px;background:#b4b4b4"></div>
<div class="t" style="left:978.8px;top:1000px;font-size:12px;color:#3a3a3a;letter-spacing:-0.139px;">Description</div>
<div class="a" style="left:1642px;top:995px;width:1px;height:20px;background:#b4b4b4"></div>
<div class="a" style="left:1643px;top:1016px;width:15px;height:87px;background:#f0f0f0"></div>
<div class="a" style="left:1643px;top:1017px;width:15px;height:15px;border:1px solid #d4d4d4;background:#fff"></div><svg style="left:1647.0px;top:1022.5px" width="7" height="4" viewBox="0 0 7 4"><path d="M0 4h7l-3.5-4z" fill="#222"/></svg>
<div class="a" style="left:1643px;top:1087px;width:15px;height:15px;border:1px solid #d4d4d4;background:#fff"></div><svg style="left:1647.0px;top:1092.5px" width="7" height="4" viewBox="0 0 7 4"><path d="M0 0h7l-3.5 4z" fill="#222"/></svg>
</div>
<div class="a" style="left:1684px;top:219px;width:15px;height:15px;border:1px solid #b8b8b8;background:#fff"></div><svg style="left:1688.0px;top:224.5px" width="7" height="4" viewBox="0 0 7 4"><path d="M0 4h7l-3.5-4z" fill="#222"/></svg>
<div class="a" style="left:1684px;top:235px;width:15px;height:365px;border:1px solid #b0b0b0;background:#fff"></div>
<div class="a" style="left:1684px;top:1066px;width:15px;height:15px;border:1px solid #b8b8b8;background:#fff"></div><svg style="left:1688.0px;top:1071.5px" width="7" height="4" viewBox="0 0 7 4"><path d="M0 0h7l-3.5 4z" fill="#222"/></svg>
<div class="a" style="left:1564px;top:1103px;width:64px;height:22px;background:#fff;border:1px solid #adadad"></div>
<div class="t" style="left:1564px;width:64px;text-align:center;text-indent:-0.89px;top:1109px;font-size:12px;color:#222;letter-spacing:-0.89px;">Save</div>
<div class="a" style="left:1634px;top:1103px;width:64px;height:22px;background:#fff;border:1px solid #adadad"></div>
<div class="t" style="left:1634px;width:64px;text-align:center;text-indent:-0.555px;top:1109px;font-size:12px;color:#222;letter-spacing:-0.555px;">Cancel</div>
</body></html>
